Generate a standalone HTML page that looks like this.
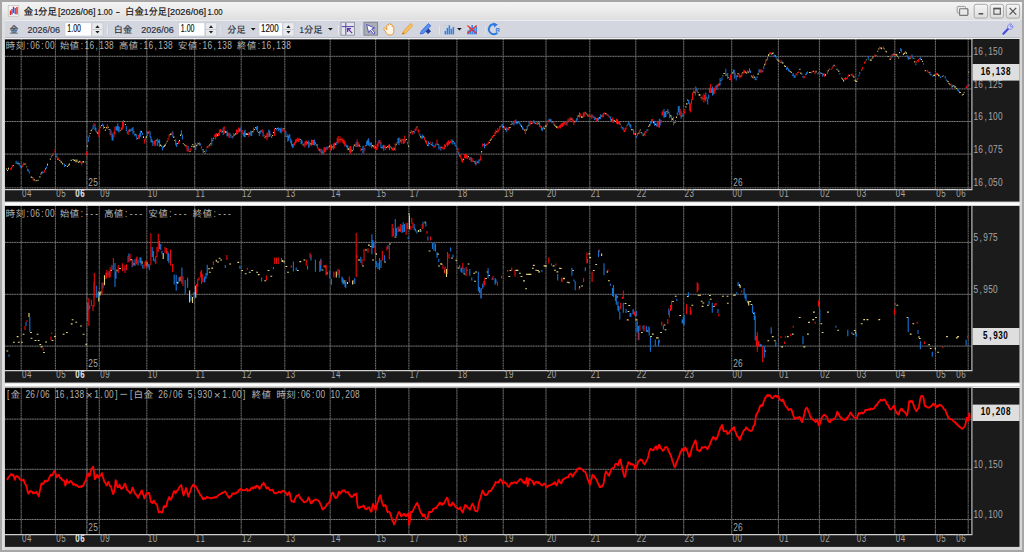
<!DOCTYPE html>
<html lang="ja"><head><meta charset="utf-8"><title>金1分足[2026/06]1.00 - 白金1分足[2026/06]1.00</title>
<style>
html,body{margin:0;padding:0;background:#a6a6a6;overflow:hidden}
svg{display:block}
text{white-space:pre}
</style></head><body>
<svg width="1024" height="552" viewBox="0 0 1024 552">
<defs>
<linearGradient id="gt" x1="0" y1="0" x2="0" y2="1"><stop offset="0" stop-color="#f3f3f3"/><stop offset="0.5" stop-color="#ebebeb"/><stop offset="1" stop-color="#dedede"/></linearGradient>
<linearGradient id="gb" x1="0" y1="0" x2="0" y2="1"><stop offset="0" stop-color="#f6f6f6"/><stop offset="1" stop-color="#dcdcdc"/></linearGradient>
</defs>
<rect x="0" y="0" width="1024" height="552" fill="#a6a6a6"/>
<rect x="2" y="2" width="1020" height="548" fill="#e6e6e6"/>
<rect x="2" y="2" width="1020" height="18" fill="url(#gt)"/>
<rect x="5" y="20" width="1015" height="18" fill="#d3d6de"/>
<rect x="5" y="20" width="1015" height="1" fill="#e9ebf0"/>
<rect x="5" y="37" width="1015" height="1" fill="#b9bdc8"/>
<rect x="5" y="38" width="1015" height="1" fill="#e8e8e8"/>
<g>
<rect x="8.2" y="5.6" width="10.6" height="10.6" fill="#f4f4f4" stroke="#b8b8b8" stroke-width="0.6"/>
<rect x="9.8" y="10.5" width="1.4" height="4.5" fill="#e82020"/>
<rect x="11.3" y="9" width="1.4" height="5.4" fill="#2a6ae0"/>
<rect x="12.8" y="6.8" width="1.4" height="6.2" fill="#e82020"/>
<rect x="14.5" y="8" width="1.4" height="6.199999999999999" fill="#2a6ae0"/>
<rect x="16.3" y="7" width="1.4" height="7.4" fill="#e82020"/>
</g>
<text x="23.8" y="14.6" textLength="9.4" lengthAdjust="spacingAndGlyphs" font-family="'Liberation Sans','IPAGothic','Noto Sans CJK JP',sans-serif" font-size="10" fill="#151515" stroke="#151515" stroke-width="0.18">金</text>
<text x="33.9" y="14.6" textLength="4.4" lengthAdjust="spacingAndGlyphs" font-family="'Liberation Sans',sans-serif" font-size="9.8" fill="#151515" stroke="#151515" stroke-width="0.18">1</text>
<text x="38" y="14.6" textLength="19" lengthAdjust="spacingAndGlyphs" font-family="'Liberation Sans','IPAGothic','Noto Sans CJK JP',sans-serif" font-size="10" fill="#151515" stroke="#151515" stroke-width="0.18">分足</text>
<text x="58" y="14.6" textLength="37.6" lengthAdjust="spacingAndGlyphs" font-family="'Liberation Sans',sans-serif" font-size="9.6" fill="#151515" stroke="#151515" stroke-width="0.18">[2026/06]</text>
<text x="97.3" y="14.6" textLength="15.2" lengthAdjust="spacingAndGlyphs" font-family="'Liberation Sans',sans-serif" font-size="9.6" fill="#151515" stroke="#151515" stroke-width="0.18">1.00</text>
<text x="115.8" y="14.6" textLength="4.2" lengthAdjust="spacingAndGlyphs" font-family="'Liberation Sans',sans-serif" font-size="9.6" fill="#151515" stroke="#151515" stroke-width="0.18">-</text>
<text x="125" y="14.6" textLength="18.8" lengthAdjust="spacingAndGlyphs" font-family="'Liberation Sans','IPAGothic','Noto Sans CJK JP',sans-serif" font-size="10" fill="#151515" stroke="#151515" stroke-width="0.18">白金</text>
<text x="144.0" y="14.6" textLength="4.4" lengthAdjust="spacingAndGlyphs" font-family="'Liberation Sans',sans-serif" font-size="9.8" fill="#151515" stroke="#151515" stroke-width="0.18">1</text>
<text x="148.7" y="14.6" textLength="18.2" lengthAdjust="spacingAndGlyphs" font-family="'Liberation Sans','IPAGothic','Noto Sans CJK JP',sans-serif" font-size="10" fill="#151515" stroke="#151515" stroke-width="0.18">分足</text>
<text x="167.5" y="14.6" textLength="38.6" lengthAdjust="spacingAndGlyphs" font-family="'Liberation Sans',sans-serif" font-size="9.6" fill="#151515" stroke="#151515" stroke-width="0.18">[2026/06]</text>
<text x="207.5" y="14.6" textLength="15.2" lengthAdjust="spacingAndGlyphs" font-family="'Liberation Sans',sans-serif" font-size="9.6" fill="#151515" stroke="#151515" stroke-width="0.18">1.00</text>
<rect x="959.6" y="8.8" width="8.2" height="6.6" fill="#e6e6e6" stroke="#8a8a8a" stroke-width="1.1" rx="0.8"/>
<rect x="957.2" y="6.4" width="8.2" height="6.6" fill="#ececec" stroke="#9a9a9a" stroke-width="1" rx="0.8"/>
<rect x="959.6" y="8.8" width="8.2" height="6.6" fill="#e9e9e9" stroke="#7a7a7a" stroke-width="1.1" rx="0.8"/>
<rect x="974.2" y="4.3" width="13.4" height="13.8" rx="2" fill="url(#gb)" stroke="#a9a9a9" stroke-width="1"/>
<rect x="990.2" y="4.3" width="13.4" height="13.8" rx="2" fill="url(#gb)" stroke="#a9a9a9" stroke-width="1"/>
<rect x="1006.2" y="4.3" width="13.4" height="13.8" rx="2" fill="url(#gb)" stroke="#a9a9a9" stroke-width="1"/>
<rect x="978.6" y="13" width="4.6" height="1.6" fill="#555"/>
<rect x="993.9" y="8.4" width="6.4" height="5.8" fill="none" stroke="#555" stroke-width="1.1"/>
<rect x="993.4" y="7.8" width="7.4" height="1.6" fill="#555"/>
<path d="M1009.6 7.9 L1016.2 14.6 M1016.2 7.9 L1009.6 14.6" stroke="#555" stroke-width="1.3" fill="none"/>
<text x="9.4" y="33.2" textLength="8.8" lengthAdjust="spacingAndGlyphs" font-family="'Liberation Sans','IPAGothic','Noto Sans CJK JP',sans-serif" font-size="9.6" fill="#2a3040" stroke="#2a3040" stroke-width="0.18">金</text>
<text x="27.6" y="32.8" textLength="32.4" lengthAdjust="spacingAndGlyphs" font-family="'Liberation Sans',sans-serif" font-size="9.4" fill="#2a3040" stroke="#2a3040" stroke-width="0.18">2026/06</text>
<rect x="65" y="22.8" width="26.299999999999997" height="13.2" fill="#ffffff" stroke="#c3c8d2" stroke-width="0.6"/>
<rect x="91.89999999999999" y="22.8" width="11.100000000000003" height="13.2" fill="#e9eaee" stroke="#c0c4cc" stroke-width="0.6"/>
<rect x="92.5" y="29.1" width="9.900000000000002" height="0.8" fill="#bfc3cb"/>
<path d="M95.35 27.9 L97.44999999999999 25.3 L99.54999999999998 27.9 Z M95.35 31 L97.44999999999999 33.6 L99.54999999999998 31 Z" fill="#222"/>
<text x="67.3" y="31.5" textLength="13.6" lengthAdjust="spacingAndGlyphs" font-family="'Liberation Sans',sans-serif" font-size="10.2" fill="#151515" stroke="#151515" stroke-width="0.2">1.00</text>
<rect x="106.9" y="25.4" width="1.2" height="9" fill="#e6e9ee"/>
<rect x="108.0" y="25.4" width="0.6" height="9" fill="#c3c7d0"/>
<text x="113.8" y="33.2" textLength="18.4" lengthAdjust="spacingAndGlyphs" font-family="'Liberation Sans','IPAGothic','Noto Sans CJK JP',sans-serif" font-size="9.6" fill="#2a3040" stroke="#2a3040" stroke-width="0.18">白金</text>
<text x="141.3" y="32.8" textLength="32.4" lengthAdjust="spacingAndGlyphs" font-family="'Liberation Sans',sans-serif" font-size="9.4" fill="#2a3040" stroke="#2a3040" stroke-width="0.18">2026/06</text>
<rect x="178.6" y="22.8" width="26.200000000000017" height="13.2" fill="#ffffff" stroke="#c3c8d2" stroke-width="0.6"/>
<rect x="205.4" y="22.8" width="11.199999999999983" height="13.2" fill="#e9eaee" stroke="#c0c4cc" stroke-width="0.6"/>
<rect x="206.0" y="29.1" width="9.999999999999982" height="0.8" fill="#bfc3cb"/>
<path d="M208.9 27.9 L211.0 25.3 L213.1 27.9 Z M208.9 31 L211.0 33.6 L213.1 31 Z" fill="#222"/>
<text x="180.8" y="31.5" textLength="13.6" lengthAdjust="spacingAndGlyphs" font-family="'Liberation Sans',sans-serif" font-size="10.2" fill="#151515" stroke="#151515" stroke-width="0.2">1.00</text>
<rect x="220.4" y="25.4" width="1.2" height="9" fill="#e6e9ee"/>
<rect x="221.5" y="25.4" width="0.6" height="9" fill="#c3c7d0"/>
<text x="227.3" y="33.2" textLength="18.2" lengthAdjust="spacingAndGlyphs" font-family="'Liberation Sans','IPAGothic','Noto Sans CJK JP',sans-serif" font-size="9.6" fill="#2a3040" stroke="#2a3040" stroke-width="0.18">分足</text>
<path d="M250.8 27.9 L255.6 27.9 L253.2 30.6 Z" fill="#1a1a1a"/>
<rect x="259" y="22.8" width="23.30000000000001" height="13.2" fill="#ffffff" stroke="#c3c8d2" stroke-width="0.6"/>
<rect x="282.90000000000003" y="22.8" width="11.099999999999989" height="13.2" fill="#e9eaee" stroke="#c0c4cc" stroke-width="0.6"/>
<rect x="283.5" y="29.1" width="9.899999999999988" height="0.8" fill="#bfc3cb"/>
<path d="M286.35 27.9 L288.45000000000005 25.3 L290.55000000000007 27.9 Z M286.35 31 L288.45000000000005 33.6 L290.55000000000007 31 Z" fill="#222"/>
<text x="261" y="31.5" textLength="17.6" lengthAdjust="spacingAndGlyphs" font-family="'Liberation Sans',sans-serif" font-size="10.2" fill="#151515" stroke="#151515" stroke-width="0.2">1200</text>
<text x="299.6" y="32.8" textLength="4.4" lengthAdjust="spacingAndGlyphs" font-family="'Liberation Sans',sans-serif" font-size="9.6" fill="#2a3040" stroke="#2a3040" stroke-width="0.18">1</text>
<text x="304" y="33.2" textLength="18.6" lengthAdjust="spacingAndGlyphs" font-family="'Liberation Sans','IPAGothic','Noto Sans CJK JP',sans-serif" font-size="9.6" fill="#2a3040" stroke="#2a3040" stroke-width="0.18">分足</text>
<path d="M328 27.9 L332.8 27.9 L330.4 30.6 Z" fill="#1a1a1a"/>
<rect x="337.9" y="25.4" width="1.2" height="9" fill="#e6e9ee"/>
<rect x="339.0" y="25.4" width="0.6" height="9" fill="#c3c7d0"/>
<rect x="341" y="22.2" width="13.4" height="13" fill="#e3e6ec" stroke="#8d9099" stroke-width="0.9"/>
<path d="M345.8 23 V34.6 M341.8 26.6 H353.8" stroke="#5a3fb0" stroke-width="1" fill="none"/>
<path d="M352.2 33.2 L348.2 29.2 M347.6 32 V28.6 H351" stroke="#5a2fa0" stroke-width="1.1" fill="none"/>
<rect x="360.79999999999995" y="25.4" width="1.2" height="9" fill="#e6e9ee"/>
<rect x="361.9" y="25.4" width="0.6" height="9" fill="#c3c7d0"/>
<rect x="364" y="22.2" width="13.6" height="13" fill="#a9adb6" stroke="#7e828c" stroke-width="0.9"/>
<path d="M366.6 24.6 L374.6 28 L371.6 29 L375 33 L373.4 34 L370.4 30.2 L368.6 32.6 Z" fill="#ffffff" stroke="#4a3fc0" stroke-width="0.9" stroke-linejoin="round"/>
<path d="M385.6 28.4 C384.6 27 383.2 27.6 384 29.2 L386.6 33.4 C387.4 34.6 388.6 35 390.4 35 C392.6 35 393.8 33.6 393.8 31.4 L393.8 27.2 C393.8 26 392.4 26 392.2 27 L392.2 25.2 C392.2 24 390.6 24 390.4 25 L390.4 24.4 C390.2 23.2 388.6 23.2 388.6 24.6 L388.4 25.4 C388.2 24.4 386.8 24.4 386.8 25.6 L386.8 30 Z" fill="#fff6e6" stroke="#e89a3a" stroke-width="1"/>
<path d="M402.4 34.2 L403.4 31.2 L410.6 23.6 L412.8 25.6 L405.6 33.2 Z" fill="#f6c064" stroke="#e89a30" stroke-width="0.8" stroke-linejoin="round"/>
<path d="M402.4 34.2 L403 32.4 L404.2 33.6 Z" fill="#c04020"/>
<path d="M420.2 34 L421.4 31 L428.4 23.6 L430.8 25.8 L423.8 33.2 Z" fill="#5a90f0" stroke="#2f62d8" stroke-width="0.8" stroke-linejoin="round"/>
<path d="M425.6 31.6 L428.6 28.6 L431 31.2 L428 34 Z" fill="#1f3f9a"/>
<rect x="439.2" y="25.4" width="1.2" height="9" fill="#e6e9ee"/>
<rect x="440.3" y="25.4" width="0.6" height="9" fill="#c3c7d0"/>
<rect x="443.4" y="24" width="11.4" height="10.8" fill="#cfd3db"/>
<rect x="444.6" y="31.0" width="1.5" height="3.4" fill="#2f7fe6"/>
<rect x="446.6" y="28.0" width="1.5" height="6.4" fill="#2f7fe6"/>
<rect x="448.6" y="25.4" width="1.5" height="9" fill="#2f7fe6"/>
<rect x="450.6" y="28.799999999999997" width="1.5" height="5.6" fill="#2f7fe6"/>
<rect x="452.6" y="27.0" width="1.5" height="7.4" fill="#2f7fe6"/>
<path d="M457 27.9 L461.8 27.9 L459.4 30.6 Z" fill="#1a1a1a"/>
<rect x="466.4" y="24" width="11" height="10.8" fill="#d6d9e0"/>
<rect x="467.4" y="30.4" width="1.5" height="4" fill="#2f7fe6"/>
<rect x="469.4" y="27.4" width="1.5" height="7" fill="#2f7fe6"/>
<rect x="471.4" y="25.0" width="1.5" height="9.4" fill="#2f7fe6"/>
<rect x="473.4" y="28.4" width="1.5" height="6" fill="#2f7fe6"/>
<rect x="475.4" y="26.4" width="1.5" height="8" fill="#2f7fe6"/>
<path d="M467.4 25.6 L476.6 33.6 M476.6 25.6 L467.4 33.6" stroke="#e83030" stroke-width="1.3" fill="none"/>
<rect x="485.4" y="25.4" width="1.2" height="9" fill="#e6e9ee"/>
<rect x="486.5" y="25.4" width="0.6" height="9" fill="#c3c7d0"/>
<path d="M497.4 32.6 A4.9 4.9 0 1 1 495.4 24.6" stroke="#2a78e0" stroke-width="1.9" fill="none"/>
<path d="M493.2 22.4 L497.8 24.4 L494.2 27.4 Z" fill="#2a78e0"/>
<text x="495.6" y="31.6" font-size="6" font-weight="bold" fill="#2a78e0" font-family="'Liberation Sans',sans-serif">R</text>
<path d="M1003.4 33.8 L1008.4 28.4" stroke="#4a52e0" stroke-width="2.2" stroke-linecap="round" fill="none"/>
<path d="M1008.2 28.6 C1006.8 26.2 1008.8 23.4 1011.6 24 L1009.8 26 L1010.8 27.4 L1012.8 25.6 C1013.6 28.4 1010.8 30.2 1008.2 28.6 Z" fill="#e6e9ff" stroke="#6a70e8" stroke-width="0.9"/>
<rect x="4.6" y="39" width="1015.0" height="162.9" fill="#1b1b1b"/>
<rect x="5" y="39" width="966.5" height="150" fill="#000"/>
<path d="M5 56.3 H971.5 M5 88.9 H971.5 M5 121.5 H971.5 M5 154.1 H971.5 M5 187.9 H971.5 " stroke="#848484" stroke-width="0.95" stroke-dasharray="1.3 0.37" fill="none"/>
<path d="M21.2 39 V189 M55.4 39 V189 M99.3 39 V189 M146.8 39 V189 M194.7 39 V189 M241.2 39 V189 M284.8 39 V189 M330.2 39 V189 M375.6 39 V189 M408.9 39 V189 M456.9 39 V189 M503.2 39 V189 M546 39 V189 M589.8 39 V189 M635.8 39 V189 M683.7 39 V189 M731.7 39 V189 M778.4 39 V189 M819.4 39 V189 M855.8 39 V189 M894.8 39 V189 M935.4 39 V189 M968.2 39 V189 " stroke="#6e6e6e" stroke-width="1.05" stroke-dasharray="1.3 0.37" fill="none"/>
<path d="M86.9 39 V189" stroke="#8c8c8c" stroke-width="1.1" stroke-dasharray="1.3 0.37" fill="none"/>
<path d="M4.6 189.6 H972.4" stroke="#cfcfcf" stroke-width="1.3" fill="none"/>
<path d="M971.9 39 V189.7" stroke="#acacac" stroke-width="1.3" fill="none"/>
<text transform="translate(21.90 197.1) scale(0.8 1)" x="0.29 6.44" fill="#a6a6a6" font-family="'Liberation Sans',sans-serif" font-size="10">04</text>
<text transform="translate(56.10 197.1) scale(0.8 1)" x="0.29 6.44" fill="#a6a6a6" font-family="'Liberation Sans',sans-serif" font-size="10">05</text>
<text transform="translate(100.00 197.1) scale(0.8 1)" x="0.29 6.44" fill="#a6a6a6" font-family="'Liberation Sans',sans-serif" font-size="10">09</text>
<text transform="translate(147.50 197.1) scale(0.8 1)" x="0.29 6.44" fill="#a6a6a6" font-family="'Liberation Sans',sans-serif" font-size="10">10</text>
<text transform="translate(195.40 197.1) scale(0.8 1)" x="0.29 6.44" fill="#a6a6a6" font-family="'Liberation Sans',sans-serif" font-size="10">11</text>
<text transform="translate(241.90 197.1) scale(0.8 1)" x="0.29 6.44" fill="#a6a6a6" font-family="'Liberation Sans',sans-serif" font-size="10">12</text>
<text transform="translate(285.50 197.1) scale(0.8 1)" x="0.29 6.44" fill="#a6a6a6" font-family="'Liberation Sans',sans-serif" font-size="10">13</text>
<text transform="translate(330.90 197.1) scale(0.8 1)" x="0.29 6.44" fill="#a6a6a6" font-family="'Liberation Sans',sans-serif" font-size="10">14</text>
<text transform="translate(376.30 197.1) scale(0.8 1)" x="0.29 6.44" fill="#a6a6a6" font-family="'Liberation Sans',sans-serif" font-size="10">15</text>
<text transform="translate(409.60 197.1) scale(0.8 1)" x="0.29 6.44" fill="#a6a6a6" font-family="'Liberation Sans',sans-serif" font-size="10">17</text>
<text transform="translate(457.60 197.1) scale(0.8 1)" x="0.29 6.44" fill="#a6a6a6" font-family="'Liberation Sans',sans-serif" font-size="10">18</text>
<text transform="translate(503.90 197.1) scale(0.8 1)" x="0.29 6.44" fill="#a6a6a6" font-family="'Liberation Sans',sans-serif" font-size="10">19</text>
<text transform="translate(546.70 197.1) scale(0.8 1)" x="0.29 6.44" fill="#a6a6a6" font-family="'Liberation Sans',sans-serif" font-size="10">20</text>
<text transform="translate(590.50 197.1) scale(0.8 1)" x="0.29 6.44" fill="#a6a6a6" font-family="'Liberation Sans',sans-serif" font-size="10">21</text>
<text transform="translate(636.50 197.1) scale(0.8 1)" x="0.29 6.44" fill="#a6a6a6" font-family="'Liberation Sans',sans-serif" font-size="10">22</text>
<text transform="translate(684.40 197.1) scale(0.8 1)" x="0.29 6.44" fill="#a6a6a6" font-family="'Liberation Sans',sans-serif" font-size="10">23</text>
<text transform="translate(732.40 197.1) scale(0.8 1)" x="0.29 6.44" fill="#a6a6a6" font-family="'Liberation Sans',sans-serif" font-size="10">00</text>
<text transform="translate(779.10 197.1) scale(0.8 1)" x="0.29 6.44" fill="#a6a6a6" font-family="'Liberation Sans',sans-serif" font-size="10">01</text>
<text transform="translate(820.10 197.1) scale(0.8 1)" x="0.29 6.44" fill="#a6a6a6" font-family="'Liberation Sans',sans-serif" font-size="10">02</text>
<text transform="translate(856.50 197.1) scale(0.8 1)" x="0.29 6.44" fill="#a6a6a6" font-family="'Liberation Sans',sans-serif" font-size="10">03</text>
<text transform="translate(895.50 197.1) scale(0.8 1)" x="0.29 6.44" fill="#a6a6a6" font-family="'Liberation Sans',sans-serif" font-size="10">04</text>
<text transform="translate(936.10 197.1) scale(0.8 1)" x="0.29 6.44" fill="#a6a6a6" font-family="'Liberation Sans',sans-serif" font-size="10">05</text>
<text transform="translate(956.00 197.1) scale(0.8 1)" x="0.29 6.44" fill="#a6a6a6" font-family="'Liberation Sans',sans-serif" font-size="10">06</text>
<text transform="translate(75.00 197.1) scale(0.8 1)" x="0.29 6.44" fill="#e4e4e4" font-weight="bold" font-family="'Liberation Sans',sans-serif" font-size="10">06</text>
<text transform="translate(88.20 185.6) scale(0.8 1)" x="0.18 6.33" fill="#a6a6a6" font-family="'Liberation Sans',sans-serif" font-size="10.4">25</text>
<text transform="translate(733.00 185.6) scale(0.8 1)" x="0.18 6.33" fill="#a6a6a6" font-family="'Liberation Sans',sans-serif" font-size="10.4">26</text>
<text transform="translate(973.30 55.0) scale(0.8 1)" x="0.18 6.33 13.93 18.63 24.78 30.93" fill="#a6a6a6" font-family="'Liberation Sans',sans-serif" font-size="10.4">16,150</text>
<text transform="translate(973.30 87.6) scale(0.8 1)" x="0.18 6.33 13.93 18.63 24.78 30.93" fill="#a6a6a6" font-family="'Liberation Sans',sans-serif" font-size="10.4">16,125</text>
<text transform="translate(973.30 120.2) scale(0.8 1)" x="0.18 6.33 13.93 18.63 24.78 30.93" fill="#a6a6a6" font-family="'Liberation Sans',sans-serif" font-size="10.4">16,100</text>
<text transform="translate(973.30 152.8) scale(0.8 1)" x="0.18 6.33 13.93 18.63 24.78 30.93" fill="#a6a6a6" font-family="'Liberation Sans',sans-serif" font-size="10.4">16,075</text>
<text transform="translate(973.30 186.2) scale(0.8 1)" x="0.18 6.33 13.93 18.63 24.78 30.93" fill="#a6a6a6" font-family="'Liberation Sans',sans-serif" font-size="10.4">16,050</text>
<rect x="972.6" y="64" width="47.0" height="16.599999999999994" fill="#dedede"/>
<text transform="translate(980.40 74.8) scale(0.78 1)" x="0.35 6.82 14.74 19.77 26.24 32.72" fill="#000" font-weight="bold" font-family="'Liberation Sans',sans-serif" font-size="10.4">16,138</text>
<rect x="4.6" y="206" width="1015.0" height="176.89999999999998" fill="#1b1b1b"/>
<rect x="5" y="206" width="966.5" height="164" fill="#000"/>
<path d="M5 242.4 H971.5 M5 294.3 H971.5 M5 346.1 H971.5 " stroke="#848484" stroke-width="0.95" stroke-dasharray="1.3 0.37" fill="none"/>
<path d="M21.2 206 V370 M55.4 206 V370 M99.3 206 V370 M146.8 206 V370 M194.7 206 V370 M241.2 206 V370 M284.8 206 V370 M330.2 206 V370 M375.6 206 V370 M408.9 206 V370 M456.9 206 V370 M503.2 206 V370 M546 206 V370 M589.8 206 V370 M635.8 206 V370 M683.7 206 V370 M731.7 206 V370 M778.4 206 V370 M819.4 206 V370 M855.8 206 V370 M894.8 206 V370 M935.4 206 V370 M968.2 206 V370 " stroke="#6e6e6e" stroke-width="1.05" stroke-dasharray="1.3 0.37" fill="none"/>
<path d="M86.9 206 V370" stroke="#8c8c8c" stroke-width="1.1" stroke-dasharray="1.3 0.37" fill="none"/>
<path d="M4.6 370.6 H972.4" stroke="#cfcfcf" stroke-width="1.3" fill="none"/>
<path d="M971.9 206 V370.7" stroke="#acacac" stroke-width="1.3" fill="none"/>
<text transform="translate(21.90 378.1) scale(0.8 1)" x="0.29 6.44" fill="#a6a6a6" font-family="'Liberation Sans',sans-serif" font-size="10">04</text>
<text transform="translate(56.10 378.1) scale(0.8 1)" x="0.29 6.44" fill="#a6a6a6" font-family="'Liberation Sans',sans-serif" font-size="10">05</text>
<text transform="translate(100.00 378.1) scale(0.8 1)" x="0.29 6.44" fill="#a6a6a6" font-family="'Liberation Sans',sans-serif" font-size="10">09</text>
<text transform="translate(147.50 378.1) scale(0.8 1)" x="0.29 6.44" fill="#a6a6a6" font-family="'Liberation Sans',sans-serif" font-size="10">10</text>
<text transform="translate(195.40 378.1) scale(0.8 1)" x="0.29 6.44" fill="#a6a6a6" font-family="'Liberation Sans',sans-serif" font-size="10">11</text>
<text transform="translate(241.90 378.1) scale(0.8 1)" x="0.29 6.44" fill="#a6a6a6" font-family="'Liberation Sans',sans-serif" font-size="10">12</text>
<text transform="translate(285.50 378.1) scale(0.8 1)" x="0.29 6.44" fill="#a6a6a6" font-family="'Liberation Sans',sans-serif" font-size="10">13</text>
<text transform="translate(330.90 378.1) scale(0.8 1)" x="0.29 6.44" fill="#a6a6a6" font-family="'Liberation Sans',sans-serif" font-size="10">14</text>
<text transform="translate(376.30 378.1) scale(0.8 1)" x="0.29 6.44" fill="#a6a6a6" font-family="'Liberation Sans',sans-serif" font-size="10">15</text>
<text transform="translate(409.60 378.1) scale(0.8 1)" x="0.29 6.44" fill="#a6a6a6" font-family="'Liberation Sans',sans-serif" font-size="10">17</text>
<text transform="translate(457.60 378.1) scale(0.8 1)" x="0.29 6.44" fill="#a6a6a6" font-family="'Liberation Sans',sans-serif" font-size="10">18</text>
<text transform="translate(503.90 378.1) scale(0.8 1)" x="0.29 6.44" fill="#a6a6a6" font-family="'Liberation Sans',sans-serif" font-size="10">19</text>
<text transform="translate(546.70 378.1) scale(0.8 1)" x="0.29 6.44" fill="#a6a6a6" font-family="'Liberation Sans',sans-serif" font-size="10">20</text>
<text transform="translate(590.50 378.1) scale(0.8 1)" x="0.29 6.44" fill="#a6a6a6" font-family="'Liberation Sans',sans-serif" font-size="10">21</text>
<text transform="translate(636.50 378.1) scale(0.8 1)" x="0.29 6.44" fill="#a6a6a6" font-family="'Liberation Sans',sans-serif" font-size="10">22</text>
<text transform="translate(684.40 378.1) scale(0.8 1)" x="0.29 6.44" fill="#a6a6a6" font-family="'Liberation Sans',sans-serif" font-size="10">23</text>
<text transform="translate(732.40 378.1) scale(0.8 1)" x="0.29 6.44" fill="#a6a6a6" font-family="'Liberation Sans',sans-serif" font-size="10">00</text>
<text transform="translate(779.10 378.1) scale(0.8 1)" x="0.29 6.44" fill="#a6a6a6" font-family="'Liberation Sans',sans-serif" font-size="10">01</text>
<text transform="translate(820.10 378.1) scale(0.8 1)" x="0.29 6.44" fill="#a6a6a6" font-family="'Liberation Sans',sans-serif" font-size="10">02</text>
<text transform="translate(856.50 378.1) scale(0.8 1)" x="0.29 6.44" fill="#a6a6a6" font-family="'Liberation Sans',sans-serif" font-size="10">03</text>
<text transform="translate(895.50 378.1) scale(0.8 1)" x="0.29 6.44" fill="#a6a6a6" font-family="'Liberation Sans',sans-serif" font-size="10">04</text>
<text transform="translate(936.10 378.1) scale(0.8 1)" x="0.29 6.44" fill="#a6a6a6" font-family="'Liberation Sans',sans-serif" font-size="10">05</text>
<text transform="translate(956.00 378.1) scale(0.8 1)" x="0.29 6.44" fill="#a6a6a6" font-family="'Liberation Sans',sans-serif" font-size="10">06</text>
<text transform="translate(75.00 378.1) scale(0.8 1)" x="0.29 6.44" fill="#e4e4e4" font-weight="bold" font-family="'Liberation Sans',sans-serif" font-size="10">06</text>
<text transform="translate(88.20 366.6) scale(0.8 1)" x="0.18 6.33" fill="#a6a6a6" font-family="'Liberation Sans',sans-serif" font-size="10.4">25</text>
<text transform="translate(733.00 366.6) scale(0.8 1)" x="0.18 6.33" fill="#a6a6a6" font-family="'Liberation Sans',sans-serif" font-size="10.4">26</text>
<text transform="translate(973.30 240.8) scale(0.8 1)" x="0.18 7.78 12.48 18.63 24.78" fill="#a6a6a6" font-family="'Liberation Sans',sans-serif" font-size="10.4">5,975</text>
<text transform="translate(973.30 292.8) scale(0.8 1)" x="0.18 7.78 12.48 18.63 24.78" fill="#a6a6a6" font-family="'Liberation Sans',sans-serif" font-size="10.4">5,950</text>
<rect x="972.6" y="328" width="47.0" height="17" fill="#dedede"/>
<text transform="translate(982.80 338.8) scale(0.78 1)" x="0.35 8.27 13.29 19.77 26.24" fill="#000" font-weight="bold" font-family="'Liberation Sans',sans-serif" font-size="10.4">5,930</text>
<rect x="4.6" y="388" width="1015.0" height="158.89999999999998" fill="#1b1b1b"/>
<rect x="5" y="388" width="966.5" height="146" fill="#000"/>
<path d="M5 419.1 H971.5 M5 469.3 H971.5 M5 519.5 H971.5 " stroke="#848484" stroke-width="0.95" stroke-dasharray="1.3 0.37" fill="none"/>
<path d="M21.2 388 V534 M55.4 388 V534 M99.3 388 V534 M146.8 388 V534 M194.7 388 V534 M241.2 388 V534 M284.8 388 V534 M330.2 388 V534 M375.6 388 V534 M408.9 388 V534 M456.9 388 V534 M503.2 388 V534 M546 388 V534 M589.8 388 V534 M635.8 388 V534 M683.7 388 V534 M731.7 388 V534 M778.4 388 V534 M819.4 388 V534 M855.8 388 V534 M894.8 388 V534 M935.4 388 V534 M968.2 388 V534 " stroke="#6e6e6e" stroke-width="1.05" stroke-dasharray="1.3 0.37" fill="none"/>
<path d="M86.9 388 V534" stroke="#8c8c8c" stroke-width="1.1" stroke-dasharray="1.3 0.37" fill="none"/>
<path d="M4.6 534.6 H972.4" stroke="#cfcfcf" stroke-width="1.3" fill="none"/>
<path d="M971.9 388 V534.7" stroke="#acacac" stroke-width="1.3" fill="none"/>
<text transform="translate(21.90 542.1) scale(0.8 1)" x="0.29 6.44" fill="#a6a6a6" font-family="'Liberation Sans',sans-serif" font-size="10">04</text>
<text transform="translate(56.10 542.1) scale(0.8 1)" x="0.29 6.44" fill="#a6a6a6" font-family="'Liberation Sans',sans-serif" font-size="10">05</text>
<text transform="translate(100.00 542.1) scale(0.8 1)" x="0.29 6.44" fill="#a6a6a6" font-family="'Liberation Sans',sans-serif" font-size="10">09</text>
<text transform="translate(147.50 542.1) scale(0.8 1)" x="0.29 6.44" fill="#a6a6a6" font-family="'Liberation Sans',sans-serif" font-size="10">10</text>
<text transform="translate(195.40 542.1) scale(0.8 1)" x="0.29 6.44" fill="#a6a6a6" font-family="'Liberation Sans',sans-serif" font-size="10">11</text>
<text transform="translate(241.90 542.1) scale(0.8 1)" x="0.29 6.44" fill="#a6a6a6" font-family="'Liberation Sans',sans-serif" font-size="10">12</text>
<text transform="translate(285.50 542.1) scale(0.8 1)" x="0.29 6.44" fill="#a6a6a6" font-family="'Liberation Sans',sans-serif" font-size="10">13</text>
<text transform="translate(330.90 542.1) scale(0.8 1)" x="0.29 6.44" fill="#a6a6a6" font-family="'Liberation Sans',sans-serif" font-size="10">14</text>
<text transform="translate(376.30 542.1) scale(0.8 1)" x="0.29 6.44" fill="#a6a6a6" font-family="'Liberation Sans',sans-serif" font-size="10">15</text>
<text transform="translate(409.60 542.1) scale(0.8 1)" x="0.29 6.44" fill="#a6a6a6" font-family="'Liberation Sans',sans-serif" font-size="10">17</text>
<text transform="translate(457.60 542.1) scale(0.8 1)" x="0.29 6.44" fill="#a6a6a6" font-family="'Liberation Sans',sans-serif" font-size="10">18</text>
<text transform="translate(503.90 542.1) scale(0.8 1)" x="0.29 6.44" fill="#a6a6a6" font-family="'Liberation Sans',sans-serif" font-size="10">19</text>
<text transform="translate(546.70 542.1) scale(0.8 1)" x="0.29 6.44" fill="#a6a6a6" font-family="'Liberation Sans',sans-serif" font-size="10">20</text>
<text transform="translate(590.50 542.1) scale(0.8 1)" x="0.29 6.44" fill="#a6a6a6" font-family="'Liberation Sans',sans-serif" font-size="10">21</text>
<text transform="translate(636.50 542.1) scale(0.8 1)" x="0.29 6.44" fill="#a6a6a6" font-family="'Liberation Sans',sans-serif" font-size="10">22</text>
<text transform="translate(684.40 542.1) scale(0.8 1)" x="0.29 6.44" fill="#a6a6a6" font-family="'Liberation Sans',sans-serif" font-size="10">23</text>
<text transform="translate(732.40 542.1) scale(0.8 1)" x="0.29 6.44" fill="#a6a6a6" font-family="'Liberation Sans',sans-serif" font-size="10">00</text>
<text transform="translate(779.10 542.1) scale(0.8 1)" x="0.29 6.44" fill="#a6a6a6" font-family="'Liberation Sans',sans-serif" font-size="10">01</text>
<text transform="translate(820.10 542.1) scale(0.8 1)" x="0.29 6.44" fill="#a6a6a6" font-family="'Liberation Sans',sans-serif" font-size="10">02</text>
<text transform="translate(856.50 542.1) scale(0.8 1)" x="0.29 6.44" fill="#a6a6a6" font-family="'Liberation Sans',sans-serif" font-size="10">03</text>
<text transform="translate(895.50 542.1) scale(0.8 1)" x="0.29 6.44" fill="#a6a6a6" font-family="'Liberation Sans',sans-serif" font-size="10">04</text>
<text transform="translate(936.10 542.1) scale(0.8 1)" x="0.29 6.44" fill="#a6a6a6" font-family="'Liberation Sans',sans-serif" font-size="10">05</text>
<text transform="translate(956.00 542.1) scale(0.8 1)" x="0.29 6.44" fill="#a6a6a6" font-family="'Liberation Sans',sans-serif" font-size="10">06</text>
<text transform="translate(75.00 542.1) scale(0.8 1)" x="0.29 6.44" fill="#e4e4e4" font-weight="bold" font-family="'Liberation Sans',sans-serif" font-size="10">06</text>
<text transform="translate(88.20 530.6) scale(0.8 1)" x="0.18 6.33" fill="#a6a6a6" font-family="'Liberation Sans',sans-serif" font-size="10.4">25</text>
<text transform="translate(733.00 530.6) scale(0.8 1)" x="0.18 6.33" fill="#a6a6a6" font-family="'Liberation Sans',sans-serif" font-size="10.4">26</text>
<text transform="translate(973.30 467.6) scale(0.8 1)" x="0.18 6.33 13.93 18.63 24.78 30.93" fill="#a6a6a6" font-family="'Liberation Sans',sans-serif" font-size="10.4">10,150</text>
<text transform="translate(973.30 517.8) scale(0.8 1)" x="0.18 6.33 13.93 18.63 24.78 30.93" fill="#a6a6a6" font-family="'Liberation Sans',sans-serif" font-size="10.4">10,100</text>
<rect x="972.6" y="404.6" width="47.0" height="16.399999999999977" fill="#dedede"/>
<text transform="translate(980.40 415.40000000000003) scale(0.78 1)" x="0.35 6.82 14.74 19.77 26.24 32.72" fill="#000" font-weight="bold" font-family="'Liberation Sans',sans-serif" font-size="10.4">10,208</text>
<rect x="4.6" y="201.6" width="1015.2" height="4.4" fill="#cfcfcf"/>
<rect x="4.6" y="202.5" width="1015.2" height="2.6" fill="#ffffff"/>
<rect x="4.6" y="382.6" width="1015.2" height="4.4" fill="#cfcfcf"/>
<rect x="4.6" y="383.5" width="1015.2" height="2.6" fill="#ffffff"/>
<rect x="5" y="38" width="967.5" height="1.35" fill="#efefef"/>
<rect x="5" y="387.2" width="967.5" height="0.9" fill="#9a9a9a"/>
<text transform="translate(5.60 49.2)" x="0.02 9.86" fill="#b2b2b2" font-family="'Liberation Mono','IPAGothic','Noto Sans CJK JP',monospace" font-size="9.8">時刻</text><text transform="translate(25.28 49.2) scale(0.8 1)" x="1.63 6.33 12.48 20.08 24.78 30.93" fill="#b2b2b2" font-family="'Liberation Sans',sans-serif" font-size="10.4">:06:00</text><text transform="translate(59.72 49.2)" x="0.02 9.86" fill="#b2b2b2" font-family="'Liberation Mono','IPAGothic','Noto Sans CJK JP',monospace" font-size="9.8">始値</text><text transform="translate(79.40 49.2) scale(0.8 1)" x="1.63 6.33 12.48 20.08 24.78 30.93 37.08" fill="#b2b2b2" font-family="'Liberation Sans',sans-serif" font-size="10.4">:16,138</text><text transform="translate(118.76 49.2)" x="0.02 9.86" fill="#b2b2b2" font-family="'Liberation Mono','IPAGothic','Noto Sans CJK JP',monospace" font-size="9.8">高値</text><text transform="translate(138.44 49.2) scale(0.8 1)" x="1.63 6.33 12.48 20.08 24.78 30.93 37.08" fill="#b2b2b2" font-family="'Liberation Sans',sans-serif" font-size="10.4">:16,138</text><text transform="translate(177.80 49.2)" x="0.02 9.86" fill="#b2b2b2" font-family="'Liberation Mono','IPAGothic','Noto Sans CJK JP',monospace" font-size="9.8">安値</text><text transform="translate(197.48 49.2) scale(0.8 1)" x="1.63 6.33 12.48 20.08 24.78 30.93 37.08" fill="#b2b2b2" font-family="'Liberation Sans',sans-serif" font-size="10.4">:16,138</text><text transform="translate(236.84 49.2)" x="0.02 9.86" fill="#b2b2b2" font-family="'Liberation Mono','IPAGothic','Noto Sans CJK JP',monospace" font-size="9.8">終値</text><text transform="translate(256.52 49.2) scale(0.8 1)" x="1.63 6.33 12.48 20.08 24.78 30.93 37.08" fill="#b2b2b2" font-family="'Liberation Sans',sans-serif" font-size="10.4">:16,138</text>
<text transform="translate(5.60 216.6)" x="0.02 9.86" fill="#b2b2b2" font-family="'Liberation Mono','IPAGothic','Noto Sans CJK JP',monospace" font-size="9.8">時刻</text><text transform="translate(25.28 216.6) scale(0.8 1)" x="1.63 6.33 12.48 20.08 24.78 30.93" fill="#b2b2b2" font-family="'Liberation Sans',sans-serif" font-size="10.4">:06:00</text><text transform="translate(59.72 216.6)" x="0.02 9.86" fill="#b2b2b2" font-family="'Liberation Mono','IPAGothic','Noto Sans CJK JP',monospace" font-size="9.8">始値</text><text transform="translate(79.40 216.6) scale(0.8 1)" x="1.63 7.49 13.64 19.79" fill="#b2b2b2" font-family="'Liberation Sans',sans-serif" font-size="10.4">:---</text><text transform="translate(104.00 216.6)" x="0.02 9.86" fill="#b2b2b2" font-family="'Liberation Mono','IPAGothic','Noto Sans CJK JP',monospace" font-size="9.8">高値</text><text transform="translate(123.68 216.6) scale(0.8 1)" x="1.63 7.49 13.64 19.79" fill="#b2b2b2" font-family="'Liberation Sans',sans-serif" font-size="10.4">:---</text><text transform="translate(148.28 216.6)" x="0.02 9.86" fill="#b2b2b2" font-family="'Liberation Mono','IPAGothic','Noto Sans CJK JP',monospace" font-size="9.8">安値</text><text transform="translate(167.96 216.6) scale(0.8 1)" x="1.63 7.49 13.64 19.79" fill="#b2b2b2" font-family="'Liberation Sans',sans-serif" font-size="10.4">:---</text><text transform="translate(192.56 216.6)" x="0.02 9.86" fill="#b2b2b2" font-family="'Liberation Mono','IPAGothic','Noto Sans CJK JP',monospace" font-size="9.8">終値</text><text transform="translate(212.24 216.6) scale(0.8 1)" x="1.63 7.49 13.64 19.79" fill="#b2b2b2" font-family="'Liberation Sans',sans-serif" font-size="10.4">:---</text>
<text transform="translate(5.60 398.2) scale(0.8 1)" x="1.63" fill="#b2b2b2" font-family="'Liberation Sans',sans-serif" font-size="10.4">[</text><text transform="translate(10.52 398.2)" x="0.02" fill="#b2b2b2" font-family="'Liberation Mono','IPAGothic','Noto Sans CJK JP',monospace" font-size="9.8">金</text><text transform="translate(25.28 398.2) scale(0.8 1)" x="0.18 6.33 13.93 18.63 24.78 32.38 37.08 43.23 50.83 55.53 61.68 67.83" fill="#b2b2b2" font-family="'Liberation Sans',sans-serif" font-size="10.4">26/06 16,138</text><text x="85.84" y="398.8" fill="#b2b2b2" font-family="'Liberation Mono',monospace" font-size="11.4">×</text><text transform="translate(94.16 398.2) scale(0.8 1)" x="0.18 7.78 12.48 18.63 26.23" fill="#b2b2b2" font-family="'Liberation Sans',sans-serif" font-size="10.4">1.00]</text><text transform="translate(118.76 398.2)" x="0.02" fill="#b2b2b2" font-family="'Liberation Mono','IPAGothic','Noto Sans CJK JP',monospace" font-size="9.8">－</text><text transform="translate(128.60 398.2) scale(0.8 1)" x="1.63" fill="#b2b2b2" font-family="'Liberation Sans',sans-serif" font-size="10.4">[</text><text transform="translate(133.52 398.2)" x="0.02 9.86" fill="#b2b2b2" font-family="'Liberation Mono','IPAGothic','Noto Sans CJK JP',monospace" font-size="9.8">白金</text><text transform="translate(158.12 398.2) scale(0.8 1)" x="0.18 6.33 13.93 18.63 24.78 32.38 37.08 44.68 49.38 55.53 61.68" fill="#b2b2b2" font-family="'Liberation Sans',sans-serif" font-size="10.4">26/06 5,930</text><text x="213.76" y="398.8" fill="#b2b2b2" font-family="'Liberation Mono',monospace" font-size="11.4">×</text><text transform="translate(222.08 398.2) scale(0.8 1)" x="0.18 7.78 12.48 18.63 26.23" fill="#b2b2b2" font-family="'Liberation Sans',sans-serif" font-size="10.4">1.00]</text><text transform="translate(251.60 398.2)" x="0.02 9.86" fill="#b2b2b2" font-family="'Liberation Mono','IPAGothic','Noto Sans CJK JP',monospace" font-size="9.8">終値</text><text transform="translate(276.20 398.2)" x="0.02 9.86" fill="#b2b2b2" font-family="'Liberation Mono','IPAGothic','Noto Sans CJK JP',monospace" font-size="9.8">時刻</text><text transform="translate(295.88 398.2) scale(0.8 1)" x="1.63 6.33 12.48 20.08 24.78 30.93 38.53 43.23 49.38 56.98 61.68 67.83 73.98" fill="#b2b2b2" font-family="'Liberation Sans',sans-serif" font-size="10.4">:06:00 10,208</text>
<path d="M6.6 168.5V169.4M7.5 170.1V171.0M8.5 167.8V169.4M13.2 165.0V165.9M17.1 162.8V163.7M19.0 163.0V164.6M21.8 166.5V167.4M24.7 163.6V164.5M25.6 163.7V164.6M26.6 166.4V167.3M31.3 176.6V177.8M32.3 177.2V178.1M34.2 178.9V180.5M36.1 180.0V181.2M38.0 179.7V180.9M39.9 176.2V177.4M40.8 173.6V174.5M41.8 171.7V173.3M45.6 168.3V169.5M47.5 163.8V165.4M50.3 158.5V159.7M52.2 154.9V155.8M57.0 156.5V157.4M57.9 158.4V160.0M59.8 160.1V161.0M60.8 161.6V162.5M61.7 161.6V162.8M62.7 162.9V164.5M65.5 164.9V165.8M67.4 166.0V166.9M68.4 164.8V165.7M69.3 163.6V165.2M71.2 159.8V161.0M73.1 159.1V160.0M74.1 160.0V160.9M75.0 159.6V161.2M76.0 161.0V162.2M76.9 159.6V161.2M77.9 161.4V162.3M78.8 161.8V163.0M79.8 160.8V162.0M82.6 161.4V162.6M83.6 161.0V162.6M87.4 145.6V146.5M90.2 133.1V134.0M91.2 130.0V131.2M92.1 128.7V129.6M96.9 131.6V132.5M97.8 132.5V134.1M100.7 126.7V127.6M101.6 125.0V125.9M104.5 127.0V127.9M105.4 129.5V130.7M106.4 127.0V128.2M108.3 126.8V127.7M109.2 129.0V129.9M120.6 129.9V130.8M124.4 121.2V122.1M125.4 124.0V124.9M131.1 129.5V130.4M133.9 131.4V132.6M135.8 134.1V135.3M137.7 138.1V139.0M141.5 131.0V132.6M143.4 136.3V137.9M146.3 136.3V137.9M148.2 132.1V133.3M156.7 139.8V140.7M160.5 144.4V146.0M161.5 145.5V146.4M163.4 146.6V147.5M164.3 145.3V146.9M165.3 144.2V145.8M166.2 142.7V143.6M167.2 140.8V141.7M170.0 134.3V135.2M171.0 133.3V134.9M173.8 136.3V137.9M174.8 140.0V140.9M177.6 143.1V144.0M179.5 140.0V141.6M180.5 134.4V136.0M183.3 142.9V143.8M184.3 143.9V144.8M185.2 145.0V146.2M190.0 150.9V152.1M191.9 145.8V147.0M192.8 144.0V144.9M193.8 145.8V147.4M194.7 145.7V146.6M196.6 145.0V146.2M198.5 143.3V144.2M202.3 149.4V150.3M204.2 150.9V152.1M205.2 152.7V153.6M209.0 145.4V146.3M209.9 144.3V145.5M210.9 142.9V144.1M212.8 139.8V140.7M213.7 137.8V138.7M217.5 134.3V135.9M222.3 130.7V132.3M225.1 131.0V132.6M226.1 131.5V133.1M230.8 134.7V135.6M234.6 134.5V135.4M235.6 133.3V134.5M246.0 133.5V135.1M247.0 133.1V134.7M247.9 134.0V134.9M249.8 132.8V134.4M252.7 131.1V132.3M254.6 129.0V129.9M255.5 127.3V128.2M258.4 131.9V132.8M261.2 130.6V131.5M265.0 137.3V138.2M266.0 135.7V136.9M270.7 134.4V135.3M271.7 136.5V137.4M272.6 135.0V135.9M273.6 132.0V133.2M275.5 128.0V128.9M277.4 127.9V128.8M279.3 128.4V129.6M284.0 128.0V128.9M286.9 136.2V137.1M300.2 139.1V140.0M303.0 144.3V145.2M307.8 142.0V143.6M310.6 143.2V144.4M316.3 144.6V145.5M323.0 151.4V153.0M328.7 146.7V147.6M329.6 145.4V147.0M332.5 146.6V147.5M335.3 143.3V144.9M339.1 139.6V140.5M341.0 139.1V140.0M348.6 148.3V149.9M352.4 150.3V151.2M354.3 144.6V146.2M359.1 144.4V146.0M360.0 145.9V146.8M361.9 149.1V150.0M365.7 145.4V146.3M372.4 145.0V146.2M373.3 145.6V147.2M375.2 147.1V148.0M381.9 147.1V148.3M386.6 147.1V148.0M387.6 146.3V147.2M390.4 146.4V147.3M394.2 148.3V149.9M396.1 144.1V145.3M397.1 142.6V143.5M400.9 139.8V141.4M402.8 139.4V140.3M406.6 139.1V140.0M408.5 145.5V146.7M410.4 132.3V133.2M413.2 131.1V132.3M417.0 126.5V127.4M420.8 136.1V137.7M423.7 136.3V137.5M427.5 144.8V145.7M429.4 142.9V143.8M431.3 143.9V144.8M437.9 143.7V144.9M441.7 146.8V147.7M445.5 145.6V146.5M449.3 142.5V143.4M453.1 141.0V142.2M459.8 155.2V156.4M463.6 158.8V160.0M468.3 156.1V157.3M474.0 160.9V162.1M477.8 161.6V162.8M481.6 150.9V152.5M483.5 144.4V145.3M485.4 144.8V145.7M489.2 142.1V143.0M490.2 140.0V140.9M491.1 138.4V140.0M494.0 134.9V136.1M496.8 131.0V131.9M500.6 126.4V127.3M503.5 126.2V127.4M505.4 128.4V130.0M509.2 127.3V128.2M510.1 127.0V127.9M511.1 124.2V125.1M513.0 123.3V124.2M517.7 122.0V123.2M521.5 125.6V127.2M524.4 129.6V130.8M526.3 129.2V130.8M528.2 125.3V126.2M531.0 122.5V123.7M532.0 122.9V123.8M535.8 122.8V123.7M538.6 122.8V123.7M544.3 127.7V129.3M545.3 125.8V126.7M546.2 125.2V126.4M552.9 121.1V122.3M554.8 124.5V126.1M555.7 125.9V126.8M556.7 126.3V127.9M570.9 118.4V120.0M574.7 121.0V122.2M578.5 115.6V116.5M581.4 116.2V117.8M582.3 116.5V117.7M586.1 112.8V113.7M587.1 114.2V115.1M588.0 115.3V116.5M590.9 115.9V116.8M599.4 116.9V118.5M601.3 115.4V116.6M605.1 113.0V113.9M606.1 113.5V114.4M611.8 119.1V120.7M614.6 120.0V121.2M615.6 120.9V121.8M620.3 123.7V124.6M627.0 125.4V126.3M631.7 129.0V130.2M632.7 129.4V130.3M635.5 133.3V134.9M638.4 132.8V133.7M640.3 129.6V130.5M641.2 132.1V133.0M643.1 135.2V136.1M644.1 133.5V135.1M647.9 129.4V130.3M648.8 125.8V127.0M649.8 124.1V125.7M653.6 121.6V123.2M655.5 123.8V125.0M666.9 111.0V111.9M668.8 111.8V112.7M670.7 115.0V116.6M672.6 118.3V119.9M674.5 122.4V123.3M676.4 116.4V118.0M682.1 115.6V116.5M685.9 106.2V107.4M686.8 103.1V104.7M687.8 99.6V100.8M694.4 91.8V92.7M698.2 92.2V93.1M699.2 94.1V95.7M700.1 94.5V95.4M701.1 97.3V98.2M703.0 98.2V99.1M706.8 97.4V98.6M719.1 83.6V85.2M721.0 79.9V80.8M722.9 75.4V76.3M723.9 73.1V74.0M724.8 73.2V74.1M726.7 74.6V75.5M728.6 77.2V78.1M729.6 78.7V79.6M732.4 72.2V73.4M737.2 75.6V76.8M738.1 73.0V74.6M741.0 75.6V76.8M742.9 72.0V73.6M745.7 71.3V72.9M746.7 72.5V73.4M748.6 71.6V72.8M752.4 76.5V77.7M754.3 76.4V78.0M758.1 73.3V74.9M760.0 70.5V71.7M764.7 63.8V65.4M766.6 59.5V60.4M768.5 54.3V55.9M772.3 52.7V54.3M773.3 52.5V53.4M775.2 55.3V56.2M777.1 58.8V59.7M778.0 60.1V61.0M779.0 60.7V61.6M780.9 61.9V62.8M782.8 62.1V63.7M784.7 65.2V66.8M785.6 66.1V67.0M790.4 70.9V71.8M791.3 71.7V72.9M797.0 74.4V75.3M798.0 72.3V73.2M799.9 68.8V70.0M800.8 72.5V74.1M809.4 72.1V73.0M810.3 72.1V73.0M813.2 70.7V71.9M816.0 70.8V72.4M818.9 72.4V73.3M821.7 72.9V73.8M825.5 74.1V75.7M828.4 70.3V71.2M829.3 68.7V69.6M834.1 64.8V66.0M836.9 68.8V69.7M838.8 70.4V72.0M842.6 78.6V79.8M843.6 79.8V81.4M849.3 74.8V76.0M851.2 74.4V75.3M853.1 75.6V76.5M854.0 76.5V77.7M855.0 79.8V81.0M855.9 80.7V81.9M856.9 80.8V81.7M866.4 59.4V60.3M870.2 59.5V60.4M871.1 59.4V61.0M872.1 57.9V58.8M873.0 56.6V57.8M875.9 54.9V55.8M877.8 50.8V51.7M878.7 48.6V49.5M880.6 47.6V48.5M881.6 47.6V49.2M884.4 48.4V49.3M886.3 50.9V52.5M888.2 56.1V57.0M890.1 58.5V60.1M893.9 53.6V55.2M895.8 54.1V55.3M896.8 54.2V55.8M897.7 56.2V57.1M898.7 57.5V58.4M899.6 52.0V53.2M903.4 53.5V55.1M904.4 52.8V54.0M905.3 51.5V52.4M906.3 52.3V53.9M910.1 57.8V59.0M913.9 57.9V58.8M914.8 61.0V62.6M921.5 59.0V59.9M922.4 60.8V62.0M925.3 70.0V71.2M929.1 72.0V72.9M931.0 74.3V75.2M933.8 74.7V75.9M934.8 74.4V76.0M937.6 73.5V74.7M938.6 74.6V76.2M942.4 75.9V76.8M947.1 80.4V81.3M948.1 81.0V82.2M949.0 83.1V84.0M950.0 84.1V85.3M952.8 85.4V87.0M953.8 85.2V86.1M954.7 86.2V87.4M955.7 86.5V87.4M956.6 87.9V89.1M959.5 91.5V92.7M960.4 91.9V93.1M962.3 94.5V95.4M963.3 93.8V95.0M964.2 91.9V92.8" stroke="#e6d67c" stroke-width="1.05" fill="none"/>
<path d="M16.1 160.7V163.9M18.0 161.6V164.8M19.9 165.2V166.6M20.9 165.1V167.7M28.5 169.5V171.5M29.4 171.5V173.5M42.7 171.4V173.4M46.5 166.4V168.4M51.3 156.0V157.4M56.0 153.6V156.8M64.6 163.7V166.9M88.3 136.9V141.9M89.3 134.9V137.3M93.1 125.3V129.3M95.0 124.1V130.1M95.9 127.8V131.8M102.6 123.4V125.8M103.5 124.8V128.8M110.2 129.1V135.1M112.1 132.8V140.3M113.0 134.8V140.8M115.9 126.5V129.7M116.8 125.9V130.9M117.8 123.2V130.7M118.7 126.4V132.4M121.6 127.6V130.0M126.3 125.9V130.9M127.3 131.3V133.7M129.2 129.6V132.0M130.1 128.7V131.9M132.0 128.3V130.7M133.0 127.1V134.6M134.9 133.2V136.4M136.8 134.8V139.8M139.6 133.6V138.6M140.6 130.7V136.7M142.5 132.7V135.1M147.2 131.2V136.2M150.1 131.4V137.4M151.0 136.5V142.5M152.0 139.3V142.5M152.9 141.1V146.1M155.8 139.7V145.7M157.7 138.4V145.9M158.6 140.4V142.8M159.6 139.4V146.9M162.4 146.6V150.6M172.9 131.2V137.2M175.7 139.2V145.2M176.7 142.9V146.9M181.4 130.3V135.3M182.4 134.5V139.5M188.1 146.1V151.1M195.7 142.8V150.3M199.5 142.2V145.4M200.4 143.2V145.6M203.3 149.1V153.1M206.1 149.4V151.8M211.8 137.9V145.4M223.2 127.6V135.1M227.0 130.5V136.5M228.0 132.8V136.0M229.9 133.1V138.1M232.7 136.0V138.4M233.7 133.2V136.4M239.4 128.5V131.7M240.3 127.4V131.4M243.2 133.0V135.4M244.1 131.1V137.1M245.1 129.8V137.3M250.8 130.7V135.7M251.7 130.9V135.9M256.5 126.7V129.9M257.4 126.1V132.1M259.3 131.1V136.1M260.3 130.6V133.8M263.1 130.5V136.5M268.8 129.4V136.9M269.8 130.8V136.8M276.4 128.2V130.6M278.3 127.3V131.3M280.2 128.4V132.4M281.2 127.5V133.5M283.1 127.9V131.1M285.9 131.1V137.1M287.8 134.3V141.8M288.8 135.6V140.6M289.7 134.1V138.1M290.7 138.2V143.2M291.6 140.3V146.3M292.6 143.9V147.9M301.1 139.2V144.2M302.1 140.6V143.8M304.0 143.3V146.5M308.7 140.4V147.9M311.6 139.8V145.8M313.5 140.0V145.0M314.4 139.5V145.5M315.4 141.9V144.3M317.3 144.1V148.1M319.2 148.5V150.9M320.1 149.1V152.3M322.0 149.4V154.4M326.8 146.4V149.6M331.5 144.4V150.4M333.4 143.5V149.5M336.3 141.9V145.1M345.8 143.3V146.5M346.7 145.3V147.7M347.7 145.2V150.2M353.4 146.2V150.2M356.2 142.1V147.1M362.9 146.0V153.5M364.8 148.0V150.4M366.7 141.1V146.1M367.6 139.7V144.7M368.6 138.2V145.7M370.5 143.1V145.5M371.4 142.3V148.3M379.0 140.1V143.3M380.9 141.9V147.9M382.8 145.3V148.5M383.8 144.8V150.8M389.5 144.2V150.2M391.4 146.8V149.2M398.0 138.1V143.1M399.0 137.5V145.0M403.7 139.0V144.0M405.6 139.2V141.6M414.2 131.1V133.5M419.9 133.7V136.1M421.8 135.8V139.0M422.7 134.6V138.6M425.6 140.0V142.4M428.4 141.2V146.2M432.2 142.0V146.0M433.2 145.0V146.8M435.1 144.7V147.1M436.0 143.6V145.4M438.9 144.4V149.4M440.8 146.4V150.4M452.2 139.4V144.4M454.1 142.3V144.1M455.0 142.6V145.8M456.0 144.9V146.7M456.9 147.8V149.6M458.8 151.7V154.9M470.2 157.1V160.3M473.1 160.3V162.1M475.0 161.7V164.1M475.9 160.4V165.4M478.8 159.4V163.4M484.5 143.2V148.2M502.5 124.1V128.1M506.3 127.2V132.2M512.0 122.0V124.4M513.9 121.4V125.4M515.8 119.4V123.4M516.8 121.2V124.4M518.7 121.4V123.2M519.6 122.6V124.4M520.6 123.7V126.1M522.5 126.6V129.8M527.2 125.9V129.9M529.1 121.0V126.0M533.9 120.1V123.3M534.8 121.9V123.7M537.7 121.7V124.9M539.6 121.7V126.7M541.5 126.2V130.2M542.4 127.7V130.9M543.4 126.4V128.8M549.1 118.5V122.5M550.0 119.6V122.0M551.0 118.9V121.3M551.9 121.5V123.3M557.6 126.4V128.2M559.5 125.6V127.4M566.2 122.2V124.6M569.0 119.4V121.2M571.9 117.5V119.9M575.7 120.6V122.4M576.6 118.3V121.5M579.5 112.6V117.6M585.2 111.8V114.2M592.8 115.2V117.6M594.7 116.7V119.9M595.6 117.6V119.4M597.5 117.7V120.9M598.5 118.0V120.4M600.4 114.2V119.2M603.2 113.3V117.3M608.0 114.3V116.1M609.9 116.3V118.1M610.8 116.8V120.8M613.7 119.4V122.6M617.5 119.2V124.2M619.4 121.2V124.4M622.2 126.9V128.7M623.2 127.6V130.0M627.9 123.4V125.2M628.9 122.0V124.4M629.8 123.5V126.7M630.8 124.6V128.6M633.6 129.4V134.4M636.5 135.9V137.7M642.2 132.7V134.5M646.9 129.4V131.2M650.7 120.9V124.1M651.7 119.2V123.2M654.5 120.8V125.8M656.4 123.6V126.6M659.3 118.8V127.8M660.2 119.6V125.6M664.0 109.0V118.0M665.0 111.9V116.9M665.9 111.0V117.0M667.8 109.1V114.1M669.7 113.3V118.3M671.6 115.8V120.8M675.4 120.0V123.0M677.3 112.4V115.4M678.3 106.3V112.3M679.2 106.1V115.1M681.1 111.2V118.7M683.0 113.3V116.3M688.7 99.9V103.9M696.3 87.5V91.5M705.8 92.5V101.5M707.7 98.4V104.4M708.7 94.5V98.5M709.6 87.8V92.8M711.5 87.9V92.9M712.5 86.5V95.5M713.4 88.6V94.6M716.3 84.9V89.9M720.1 78.1V85.6M722.0 77.2V80.2M725.8 68.7V76.2M727.7 72.9V78.9M733.4 69.7V73.7M734.3 69.8V78.8M736.2 75.6V80.6M749.5 68.3V72.3M750.5 70.6V73.0M751.4 74.9V77.3M755.2 76.7V79.9M756.2 78.4V80.2M757.1 76.2V78.0M759.0 69.1V73.1M762.8 70.1V71.9M763.8 66.0V69.2M767.6 56.8V60.0M771.4 52.8V55.2M774.2 54.5V57.1M776.1 56.0V58.6M781.8 60.6V63.2M786.6 67.5V70.1M787.5 66.7V69.3M788.5 68.6V71.2M789.4 70.1V72.1M792.3 74.4V75.8M793.2 72.9V76.3M794.2 75.4V78.0M795.1 75.2V77.8M801.8 73.0V75.0M802.7 76.2V77.6M806.5 72.2V74.8M811.3 71.9V73.3M817.9 73.0V74.4M820.8 72.0V74.0M822.7 73.3V76.7M823.6 73.5V75.5M833.1 65.6V67.0M837.9 69.5V70.9M839.8 73.0V74.4M841.7 77.1V79.1M858.8 75.0V76.4M859.7 72.0V74.6M868.3 56.3V59.7M885.4 50.4V51.8M892.0 54.0V57.4M900.6 48.3V50.9M907.2 55.2V57.2M908.2 56.4V59.8M909.1 57.3V59.3M912.0 54.5V57.1M912.9 56.8V58.8M915.8 63.2V65.2M917.7 59.9V61.3M920.5 57.2V59.8M923.4 63.3V64.7M930.0 71.7V75.1M932.9 75.5V76.9M939.5 75.1V76.5M940.5 76.5V77.9M943.3 75.0V76.4M945.2 76.0V78.6M946.2 79.3V80.7M951.9 84.6V88.0M957.6 88.7V90.7M958.5 89.5V91.5M969.0 84.2V86.2" stroke="#1474d6" stroke-width="1.05" fill="none"/>
<path d="M10.4 168.3V169.7M11.4 167.1V169.7M12.3 165.2V167.2M22.8 164.4V167.0M23.7 162.5V165.1M27.5 168.6V171.2M33.2 177.4V180.6M43.7 171.7V173.1M44.6 170.0V172.6M53.2 152.8V155.4M55.1 149.2V152.4M58.9 157.6V160.2M80.7 161.6V163.0M81.7 162.1V165.3M85.5 161.3V162.7M86.4 151.4V155.4M94.0 122.9V126.1M98.8 129.6V137.1M99.7 125.6V133.1M107.3 124.3V129.3M111.1 130.6V136.6M114.0 131.5V137.5M114.9 126.8V134.3M119.7 126.7V131.7M122.5 122.1V129.6M123.5 119.9V127.4M128.2 129.7V134.7M138.7 135.0V139.0M144.4 139.5V143.5M145.3 138.1V140.5M149.1 130.6V133.8M153.9 141.1V144.3M154.8 140.2V146.2M168.1 138.0V140.4M169.1 134.5V137.7M171.9 132.3V134.7M178.6 141.0V144.2M186.2 145.0V147.4M187.1 146.4V151.4M189.0 148.7V151.9M190.9 147.8V151.0M197.6 142.6V145.8M201.4 146.3V148.7M207.1 145.9V148.3M208.0 145.9V148.3M214.7 134.6V137.0M215.6 133.4V139.4M216.6 133.0V137.0M218.5 132.8V136.0M219.4 129.8V135.8M220.4 128.9V132.1M221.3 129.5V132.7M224.2 126.3V133.8M228.9 132.5V137.5M231.8 135.7V138.1M236.5 129.5V134.5M237.5 129.9V133.9M238.4 127.4V132.4M241.3 128.7V131.1M242.2 129.9V133.9M248.9 132.0V137.0M253.6 127.5V132.5M262.2 129.3V133.3M264.1 134.4V136.8M266.9 132.7V140.2M267.9 132.5V137.5M274.5 128.4V135.9M282.1 128.6V131.8M285.0 129.2V132.4M293.5 143.5V147.5M294.5 142.2V145.4M295.4 139.6V143.6M296.4 139.3V142.5M297.3 137.8V141.0M298.3 138.8V142.0M299.2 137.7V141.7M304.9 141.6V147.6M305.9 140.7V144.7M306.8 140.4V145.4M309.7 141.9V146.9M312.5 140.1V145.1M318.2 147.4V150.6M321.1 148.6V153.6M323.9 147.6V155.1M324.9 147.1V152.1M325.8 147.5V151.5M327.7 146.8V150.0M330.6 144.4V150.4M334.4 142.4V148.4M337.2 138.3V143.3M338.2 135.9V143.4M340.1 136.4V142.4M342.0 137.8V141.8M342.9 139.2V143.2M343.9 140.2V144.2M344.8 140.5V146.5M349.6 146.4V152.4M350.5 145.9V153.4M351.5 148.8V152.0M355.3 144.1V146.5M357.2 139.5V147.0M358.1 142.3V147.3M361.0 148.0V151.2M363.8 145.5V153.0M369.5 141.7V146.7M374.3 145.1V149.1M376.2 147.0V150.2M377.1 143.7V149.7M378.1 141.2V147.2M380.0 139.9V143.9M384.7 145.3V148.5M385.7 146.3V150.3M388.5 144.8V148.0M392.3 148.0V150.4M393.3 146.7V150.7M395.2 143.3V150.8M399.9 137.9V142.9M401.8 138.7V143.7M404.7 135.8V143.3M407.5 141.4V144.6M409.4 134.2V136.6M411.3 129.9V133.1M412.3 131.5V134.7M415.1 128.8V131.2M416.1 127.2V130.4M418.0 129.1V131.5M418.9 130.2V133.4M424.6 137.1V140.3M426.5 140.6V144.6M430.3 141.8V143.6M434.1 146.1V147.9M437.0 139.6V144.6M439.8 146.7V148.5M442.7 146.7V149.1M443.6 147.8V149.6M444.6 144.3V149.3M446.5 143.0V144.8M447.4 141.5V146.5M448.4 140.2V145.2M450.3 141.3V143.1M451.2 139.2V143.2M457.9 147.8V152.8M460.7 154.6V158.6M461.7 157.7V161.7M462.6 158.7V162.7M464.5 153.9V157.9M465.5 153.8V158.8M466.4 154.5V158.5M467.4 155.0V159.0M469.3 157.5V159.9M471.2 157.1V162.1M472.1 157.9V161.9M476.9 162.4V164.2M479.7 159.0V161.4M480.7 155.5V160.5M482.6 143.5V146.7M486.4 143.7V145.5M487.3 143.5V145.3M488.3 141.5V143.9M492.1 135.8V138.2M493.0 135.9V137.7M494.9 131.9V135.9M495.9 129.7V133.7M497.8 127.9V132.9M498.7 129.6V131.4M499.7 125.8V129.8M501.6 124.2V126.6M504.4 126.4V128.8M507.3 128.1V130.5M508.2 127.2V130.4M514.9 120.3V123.5M523.4 127.7V130.1M525.3 129.1V134.1M530.1 120.6V125.6M532.9 121.8V123.6M536.7 122.8V124.6M540.5 125.7V127.5M547.2 122.8V125.2M548.1 120.1V121.9M553.8 120.9V124.9M558.6 126.4V128.8M560.5 124.4V128.4M561.4 123.3V126.5M562.4 122.9V126.9M563.3 121.9V125.9M564.3 122.1V124.5M565.2 122.3V125.5M567.1 120.7V125.7M568.1 118.5V122.5M570.0 117.0V121.0M572.8 118.2V122.2M573.8 120.0V125.0M577.6 115.2V120.2M580.4 113.5V116.7M583.3 112.5V117.5M584.2 112.0V117.0M589.0 113.9V117.1M589.9 115.1V117.5M591.8 113.9V118.9M593.7 115.9V118.3M596.6 118.0V121.2M602.3 114.4V117.6M604.2 112.2V114.6M607.0 113.6V115.4M608.9 115.5V117.3M612.7 117.4V122.4M616.5 118.7V123.7M618.4 121.1V124.3M621.3 125.6V128.0M624.1 129.8V132.2M625.1 128.0V132.0M626.0 127.1V129.5M634.6 132.7V135.1M637.4 132.9V136.1M639.3 130.2V134.2M645.0 131.2V136.2M646.0 131.0V132.8M652.6 119.1V121.5M657.4 120.8V126.8M658.3 121.4V127.4M661.2 120.0V123.0M662.1 111.4V115.4M663.1 110.8V115.8M673.5 116.4V125.4M680.2 108.7V116.2M684.0 111.7V114.7M684.9 109.1V113.1M689.7 102.0V111.0M690.6 103.6V112.6M691.6 99.1V104.1M692.5 92.6V100.1M693.5 90.6V93.6M695.4 86.5V95.5M697.3 89.6V92.6M702.0 95.4V100.4M703.9 93.5V102.5M704.9 94.9V99.9M710.6 84.1V93.1M714.4 87.7V93.7M715.3 86.2V91.2M717.2 84.5V89.5M718.2 84.1V87.1M730.5 74.4V80.4M731.5 70.1V79.1M735.3 72.6V77.6M739.1 73.2V77.2M740.0 75.2V78.4M741.9 72.8V76.0M743.8 69.8V72.2M744.8 70.2V73.4M747.6 70.2V73.4M753.3 74.7V78.7M760.9 69.1V73.1M761.9 70.2V72.6M765.7 59.8V64.8M769.5 52.4V55.6M770.4 52.2V54.0M779.9 59.8V62.4M796.1 72.9V74.9M798.9 71.6V73.0M803.7 75.7V78.3M804.6 76.3V77.7M805.6 73.5V75.5M807.5 71.2V73.8M812.2 71.2V72.6M815.1 70.8V74.2M819.8 72.7V75.3M824.6 73.6V77.0M827.4 70.8V74.2M831.2 68.7V70.1M832.2 66.7V68.7M835.0 65.4V66.8M844.5 78.0V79.4M845.5 76.9V80.3M846.4 78.0V79.4M847.4 76.7V78.7M848.3 74.4V77.0M852.1 73.4V76.0M857.8 77.7V79.7M861.6 69.0V71.0M862.6 66.9V69.5M864.5 61.8V63.8M865.4 61.3V62.7M874.9 54.4V57.0M879.7 46.4V49.0M883.5 46.5V49.1M891.1 56.9V58.9M893.0 54.1V56.1M894.9 54.5V55.9M901.5 49.1V52.5M911.0 56.0V58.6M916.7 61.3V62.7M918.6 58.9V62.3M919.6 58.0V59.4M927.2 69.7V71.7M928.1 71.3V72.7M935.7 74.3V75.7M936.7 72.7V74.7M950.9 83.8V85.2M966.1 86.5V88.5M967.1 85.4V88.0M968.0 84.7V86.1" stroke="#ee0a0a" stroke-width="1.05" fill="none"/>
<rect x="968.2" y="71.6" width="1" height="1" fill="#e6d67c"/>
<path d="M6.4 351.0h1.8M13.0 342.3h1.8M16.7 336.6h1.8M17.9 342.3h1.8M21.1 342.3h1.8M22.7 334.2h1.8M29.0 313.0V317.0M30.1 332.5h1.8M30.6 338.3h1.8M34.6 340.5h1.8M36.6 334.2h1.8M37.7 340.5h1.8M39.4 344.5h1.8M40.7 346.9h1.8M43.1 352.5h1.8M45.2 342.0h1.8M51.6 340.5h1.8M54.1 336.6h1.8M62.7 334.2h1.8M66.0 332.5h1.8M70.8 323.9h1.8M71.7 319.8h1.8M75.4 322.3h1.8M80.1 326.0h1.8M82.7 334.2h1.8M85.2 344.3h1.8M98.8 291.6V301.6M104.5 275.3V285.3M134.0 263.0V265.0M146.9 262.0V266.0M163.2 252.9V258.9M177.8 281.8V283.8M180.0 277.0V281.0M189.6 290.6V302.6M192.5 296.9V302.9M195.8 285.7V297.7M208.9 272.2h1.8M211.3 268.1h1.8M216.3 259.8V261.8M218.7 258.3h1.8M220.3 260.0h1.8M217.1 262.0h1.8M229.3 264.0h1.8M237.4 262.4h1.8M241.2 270.5h1.8M244.8 273.8h1.8M248.8 272.2h1.8M251.3 270.5h1.8M256.2 272.2h1.8M257.8 274.6h1.8M264.3 280.7h1.8M267.6 270.5h1.8M270.4 276.3h1.8M282.5 260.0V262.0M284.0 260.6V262.6M285.5 266.5h1.8M287.1 272.2h1.8M296.9 270.5h1.8M299.4 261.6h1.8M303.5 260.0h1.8M321.6 270.0h1.8M336.3 271.5V277.5M344.0 280.0V284.0M347.5 282.0V284.0M352.6 280.6V284.6M359.0 259.0V261.0M362.1 266.0h1.8M365.1 250.0h1.8M368.0 245.1h1.8M376.2 253.0V255.0M372.1 260.0h1.8M384.1 262.0h1.8M389.1 244.0h1.8M394.6 237.0h1.8M400.0 229.0V231.0M409.4 215.3V229.3M408.1 214.0h1.8M418.5 230.0V232.0M420.3 229.0V232.0M425.2 221.5V223.5M428.6 251.0h1.8M437.0 254.1h1.8M440.2 263.9h1.8M438.1 266.0h1.8M444.5 269.7V272.7M446.5 269.0V277.0M440.7 264.2h1.8M451.1 258.0h1.8M455.4 260.2h1.8M457.6 268.0h1.8M463.6 274.0h1.8M467.6 264.0h1.8M473.3 273.2h1.8M475.1 272.0h1.8M485.1 278.5h1.8M486.6 272.0h1.8M508.4 276.5h1.8M509.6 270.5h1.8M516.5 270.4h1.8M515.1 270.4h1.8M519.0 273.2h1.8M520.6 276.5h1.8M523.1 280.9h1.8M525.2 288.7h1.8M526.1 274.4h1.8M528.0 274.4h1.8M529.6 274.4h1.8M532.0 268.3h1.8M532.9 265.4h1.8M535.3 270.3h1.8M538.2 271.9h1.8M537.1 270.5h1.8M546.0 264.9V266.9M543.6 265.9h1.8M552.7 265.9h1.8M554.1 270.3h1.8M556.5 271.9h1.8M558.9 268.3h1.8M563.0 278.4h1.8M566.8 282.2h1.8M559.9 268.5h1.8M563.1 278.6h1.8M568.1 282.7h1.8M572.1 270.5h1.8M579.6 286.3V288.3M581.1 286.0h1.8M588.4 253.9h1.8M589.3 257.6h1.8M592.9 270.5h1.8M595.3 264.5h1.8M601.6 253.5V255.9M607.3 270.8V272.8M608.0 280.8h1.8M616.3 297.0h1.8M624.6 303.5h1.8M626.8 319.9h1.8M628.4 305.5h1.8M627.6 311.5h1.8M635.7 319.9h1.8M635.4 320.0h1.8M641.0 332.5h1.8M646.6 331.0h1.8M650.1 336.5h1.8M651.9 334.1h1.8M656.0 337.9h1.8M657.1 338.0h1.8M660.1 332.5h1.8M664.6 329.7h1.8M663.6 325.0h1.8M672.1 301.5h1.8M674.8 296.3h1.8M679.3 315.5h1.8M686.9 296.5h1.8M691.5 305.3h1.8M699.2 295.2h1.8M697.6 295.2h1.8M700.8 301.2h1.8M701.7 306.4h1.8M702.4 303.0h1.8M707.0 305.3h1.8M709.0 295.5h1.8M709.8 299.2h1.8M713.1 306.5h1.8M722.0 296.3h1.8M726.6 296.3h1.8M726.9 303.2h1.8M734.3 295.0h1.8M733.1 295.2h1.8M740.1 285.0V288.0M739.3 284.0V286.0M748.7 301.6V305.6M748.0 300.8V303.2M750.6 304.5h1.8M749.3 301.5h1.8M753.0 313.4h1.8M764.3 351.0h1.8M767.4 340.7h1.8M771.9 336.6h1.8M773.9 340.7h1.8M781.2 346.9h1.8M786.9 336.6h1.8M791.8 334.1h1.8M798.8 317.5h1.8M803.4 346.9h1.8M807.0 334.1h1.8M808.1 322.4h1.8M812.4 319.6h1.8M813.0 312.1h1.8M815.1 317.5h1.8M820.4 323.7h1.8M821.7 332.5h1.8M827.0 312.1h1.8M837.3 330.2h1.8M852.6 334.3h1.8M853.8 330.5h1.8M855.7 331.5V333.5M860.8 323.7h1.8M863.3 319.6h1.8M866.5 319.6h1.8M878.4 319.6h1.8M896.4 305.3h1.8M906.6 317.5h1.8M909.8 334.1h1.8M912.4 323.7h1.8M918.1 337.0h1.8M918.9 338.5h1.8M928.2 344.7h1.8M929.8 348.5h1.8M935.3 347.5V349.5M937.3 352.2h1.8M946.1 336.6h1.8M955.9 337.9h1.8M957.2 336.6h1.8M100.0 292.4V295.4M101.0 291.2V293.2M110.1 270.5h1.8M117.0 269.6V271.6M119.1 268.5h1.8M130.1 259.6h1.8M142.0 260.9V263.9M176.1 282.5h1.8M194.1 293.3h1.8M208.1 268.8h1.8M325.0 265.5V267.5M327.0 272.3V274.3M370.1 246.5h1.8M474.1 281.3h1.8M488.1 275.5h1.8" stroke="#e6d67c" stroke-width="1.1" fill="none"/>
<path d="M9.0 354.5V356.7M26.0 322.0V326.0M29.8 317.0V331.7M87.6 303.0V321.0M89.7 305.6V308.9M88.2 302.4V310.4M96.3 285.7V297.7M115.0 263.0V287.0M128.9 253.5V261.5M132.2 259.2V267.2M141.1 257.6V265.6M142.8 264.5V268.5M149.3 264.3V270.3M152.2 247.0V257.0M153.4 250.9V260.9M159.5 241.0V249.0M160.7 243.9V249.9M167.8 251.0V261.0M168.9 253.3V263.3M174.2 274.5V284.5M176.2 274.8V290.8M181.9 267.4V283.4M185.2 279.9V293.9M187.6 277.8V287.8M204.7 276.5V282.5M207.2 264.7V274.7M204.0 278.3V282.3M207.3 265.5V275.5M225.3 265.0V268.0M239.9 265.8V268.8M261.6 277.5V281.5M273.4 266.9V269.3M281.5 258.0V262.0M293.4 261.5V271.5M296.2 267.4V270.4M307.6 265.6V269.6M311.0 254.5V260.5M315.4 259.7V271.7M319.8 261.0V272.0M320.8 258.7V270.7M329.8 270.5V278.5M331.4 278.8V284.8M339.2 269.7V277.7M342.0 276.4V282.4M345.8 280.3V288.3M354.7 278.0V284.0M360.8 256.8V262.8M371.9 234.3V254.3M373.0 240.0V248.0M376.3 260.9V266.9M378.0 263.0V269.0M379.5 257.9V269.9M381.0 260.0V268.0M384.4 255.2V261.2M388.0 245.0V249.0M395.3 219.0V237.0M396.5 228.0V236.0M402.0 225.0V233.0M403.2 222.2V232.2M404.5 224.0V232.0M408.2 237.0V239.0M414.2 224.2V230.2M415.5 228.5V231.5M417.0 230.6V233.6M421.0 230.0V232.0M425.9 222.5V226.5M427.9 236.6V240.6M432.5 242.9V248.9M434.0 243.0V251.0M435.5 243.5V251.5M438.7 259.1V262.1M450.6 247.6V251.6M453.0 254.6V257.6M459.6 265.2V268.2M462.0 267.0V273.0M464.0 268.0V274.0M469.8 269.1V275.7M471.8 277.4V280.4M478.3 271.4V291.4M479.5 287.0V293.0M480.8 288.6V298.6M482.7 283.8V288.8M488.1 268.2V278.2M492.2 277.7V280.1M495.1 278.1V284.7M541.9 270.1V272.1M551.4 263.6V265.6M557.7 274.0V280.6M571.9 267.8V275.8M574.0 279.5V281.5M575.2 281.2V290.2M585.3 267.3V271.3M587.5 259.0V263.0M598.5 250.0V257.0M604.0 263.3V275.3M610.5 283.8V285.8M612.5 288.0V296.0M613.5 285.0V297.0M615.5 295.0V301.0M616.3 294.2V304.8M617.9 301.5V310.5M619.0 306.0V312.0M619.8 312.1V319.5M623.3 302.7V312.7M626.0 308.9V312.9M630.1 313.0V317.0M633.0 309.2V314.2M635.6 312.5V316.5M637.2 321.0V331.0M638.5 326.0V332.0M646.4 325.9V331.9M648.9 326.5V332.5M630.8 313.0V317.0M633.3 309.3V314.3M636.3 310.9V315.9M637.0 322.0V332.6M638.3 332.0V340.0M646.3 326.4V331.4M649.2 327.4V335.4M650.4 337.1V351.7M655.3 339.5V346.1M658.6 340.0V346.0M663.4 325.6V329.6M668.8 308.5V315.1M676.8 298.7V301.1M682.2 319.6V323.6M683.3 317.0V323.0M684.1 314.7V325.3M688.4 292.3V296.3M709.1 300.8V304.8M712.3 302.7V312.7M718.0 309.0V313.0M736.8 292.0V294.0M738.1 282.1V286.1M744.1 288.1V294.7M746.1 294.6V301.2M745.0 293.5V298.5M752.6 305.3V313.3M755.2 315.5V340.5M754.3 312.0V320.0M760.3 344.0V346.4M759.0 344.2V346.2M761.5 344.5V346.5M764.3 345.7V357.7M771.2 327.2V333.8M775.8 341.4V346.4M803.0 336.3V344.3M819.8 309.4V322.4M835.9 325.8V327.8M847.8 329.7V336.3M851.9 332.0V334.0M856.3 333.4V336.8M908.2 317.5V332.1M918.0 329.9V333.9M920.4 341.2V349.2M932.3 351.7V356.7M966.1 339.8V345.8M98.0 292.8V297.8M103.0 282.4V288.4M108.0 272.4V275.1M112.0 265.1V270.1M116.0 271.6V278.7M124.0 267.9V270.3M135.0 259.2V265.9M138.0 259.7V265.4M140.0 257.3V263.1M148.0 264.1V267.5M155.0 258.4V262.2M162.0 250.8V254.3M179.0 277.5V282.0M191.0 295.2V301.0M194.0 291.7V298.3M206.0 272.9V279.0M343.0 278.2V284.6M345.0 281.9V287.0M374.0 243.1V247.7M399.0 226.5V232.0M423.0 221.8V228.4M437.0 252.2V257.8M461.0 268.2V271.8M467.0 268.7V271.2M496.0 279.6V282.7M643.0 325.7V329.5" stroke="#1474d6" stroke-width="1.1" fill="none"/>
<path d="M25.0 326.0V330.0M27.0 320.0V322.0M43.2 348.0V350.5M51.7 332.5V334.2M51.0 336.6V339.9M88.9 298.0V326.0M93.0 305.0V311.0M94.0 282.0V306.5M91.4 300.0V306.0M94.3 273.0V297.0M102.0 282.5V294.5M106.9 269.8V277.8M110.2 267.2V277.2M113.4 258.0V270.0M118.3 265.0V273.0M122.4 263.3V271.3M126.5 264.3V270.3M136.2 257.8V263.8M150.9 233.3V265.3M155.8 256.0V264.0M157.0 247.0V257.0M158.3 233.8V251.8M165.0 247.0V253.0M166.4 248.0V254.0M170.5 249.5V265.5M172.6 264.1V272.1M183.0 276.1V286.1M196.6 284.0V294.0M197.7 278.8V286.8M200.7 271.6V277.6M202.3 273.9V281.9M201.6 270.0V284.0M213.4 261.2V265.2M226.9 255.0V260.0M247.3 267.7V270.1M266.4 275.4V280.4M274.7 257.5V264.1M276.5 257.8V263.8M278.3 257.5V264.1M291.3 265.3V267.7M306.3 259.7V265.7M310.0 253.0V258.0M321.0 259.9V264.9M326.0 264.7V274.7M326.2 265.4V275.4M333.9 271.5V277.5M338.0 269.0V275.0M349.3 276.4V282.4M353.5 280.0V284.0M356.2 233.0V277.0M362.0 259.0V265.0M364.0 248.9V260.9M375.1 245.2V253.2M382.3 250.7V260.7M386.9 246.4V250.4M389.3 245.5V259.5M392.2 224.0V237.0M393.5 228.0V236.0M400.7 224.0V232.0M406.1 222.8V234.8M407.5 223.0V229.0M410.8 226.0V230.0M411.8 217.7V223.7M422.2 223.9V228.9M430.5 236.6V240.6M445.2 266.5V269.5M447.5 252.0V274.0M444.9 267.8V273.8M462.8 263.0V269.0M466.1 267.1V276.1M481.5 288.0V298.0M483.8 281.0V287.0M484.8 277.7V285.1M497.4 281.8V285.8M501.6 275.8V278.2M507.7 269.8V271.8M511.7 267.6V270.6M515.0 269.9V276.5M548.8 257.5V263.5M555.8 263.6V265.6M561.5 277.7V281.7M562.0 278.0V282.0M579.3 287.5V289.5M583.6 278.0V282.0M586.9 252.6V263.2M592.1 271.4V282.0M599.2 249.5V252.5M608.0 269.5V271.5M620.7 302.7V309.3M623.3 290.6V298.6M622.3 297.0V299.0M635.0 312.7V315.7M639.9 325.0V331.0M644.0 325.0V331.0M634.5 311.5V315.5M639.0 332.3V340.3M639.8 325.6V329.6M643.9 326.4V331.4M659.5 339.5V342.5M661.8 321.7V325.7M667.8 319.1V324.1M669.4 310.5V317.5M671.6 300.8V309.8M670.5 305.0V311.0M686.6 304.3V314.3M690.3 307.0V315.0M691.0 310.5V314.5M697.2 282.3V292.3M698.0 283.5V290.5M714.8 303.5V306.5M716.1 302.9V305.3M718.9 313.6V316.6M741.7 290.4V292.4M757.3 332.2V351.8M756.4 336.0V346.0M758.5 341.0V347.0M762.7 346.2V362.2M781.0 336.0V338.0M784.6 341.6V344.0M785.4 336.2V337.8M790.8 333.9V336.3M793.2 325.8V327.8M815.2 321.7V323.7M818.5 300.6V306.6M895.3 302.9V305.3M894.4 309.1V315.1M917.2 321.7V323.7M924.5 341.6V344.0M942.9 346.4V348.0M967.7 336.0V338.0M106.0 272.6V279.1M109.0 270.9V277.7M125.0 265.0V272.9M128.0 256.1V262.8M130.0 253.8V261.6M133.0 260.3V266.5M137.0 256.5V264.4M144.0 264.8V268.9M145.0 261.6V265.4M146.0 260.2V267.9M181.0 276.1V281.4M199.0 277.2V280.3M324.0 264.9V267.5M357.0 255.4V258.1M368.0 248.3V252.7M398.0 226.4V231.9M413.0 222.8V228.2M427.0 231.1V234.1M443.0 265.3V269.0M449.0 253.8V258.5M493.0 276.0V280.1" stroke="#ee0a0a" stroke-width="1.1" fill="none"/>
<polyline points="6.8,479.7 7.6,479.0 8.4,477.4 9.2,476.5 10.0,475.5 10.8,474.3 11.6,474.0 12.4,475.3 13.2,474.6 14.0,476.8 14.8,479.9 15.6,477.0 16.4,476.0 17.2,476.1 18.0,477.2 18.8,477.1 19.6,478.8 20.4,480.0 21.2,479.6 22.0,480.2 22.8,480.3 23.6,479.4 24.4,482.5 25.2,484.0 26.0,485.3 26.8,487.4 27.6,491.6 28.4,493.6 29.2,492.7 30.0,491.1 30.8,490.9 31.6,492.1 32.4,492.0 33.2,493.5 34.0,492.7 34.8,493.1 35.6,492.5 36.4,491.8 37.2,493.3 38.0,494.9 38.8,496.4 39.6,491.8 40.4,488.4 41.2,484.1 42.0,483.2 42.8,484.3 43.6,483.6 44.4,481.6 45.2,480.5 46.0,481.3 46.8,481.2 47.6,481.2 48.4,479.4 49.2,478.0 50.0,476.2 50.8,474.8 51.6,475.5 52.4,475.0 53.2,473.3 54.0,471.2 54.8,471.1 55.6,473.5 56.4,477.4 57.2,476.4 58.0,475.4 58.8,474.6 59.6,477.1 60.4,478.4 61.2,477.9 62.0,479.9 62.8,480.0 63.6,480.4 64.4,481.4 65.2,485.6 66.0,483.5 66.8,479.7 67.6,481.8 68.4,482.4 69.2,482.9 70.0,481.1 70.8,481.0 71.6,482.2 72.4,482.6 73.2,484.8 74.0,484.2 74.8,484.2 75.6,485.5 76.4,485.0 77.2,485.6 78.0,486.4 78.8,487.2 79.6,486.7 80.4,486.3 81.2,487.2 82.0,485.6 82.8,486.2 83.6,485.1 84.4,482.8 85.2,481.6 86.0,479.5 86.8,476.8 87.6,473.7 88.4,473.5 89.2,476.4 90.0,475.1 90.8,470.9 91.6,468.4 92.4,468.3 93.2,466.7 94.0,472.1 94.8,479.4 95.6,478.0 96.4,476.5 97.2,474.7 98.0,476.6 98.8,477.6 99.6,475.6 100.4,475.7 101.2,474.7 102.0,473.1 102.8,476.8 103.6,479.1 104.4,482.1 105.2,482.6 106.0,484.4 106.8,485.5 107.6,483.0 108.4,481.8 109.2,484.2 110.0,486.1 110.8,486.1 111.6,489.0 112.4,491.9 113.2,494.1 114.0,491.9 114.8,488.7 115.6,480.1 116.4,481.8 117.2,486.6 118.0,487.3 118.8,486.9 119.6,484.5 120.4,487.1 121.2,488.9 122.0,488.6 122.8,487.7 123.6,486.9 124.4,484.1 125.2,483.8 126.0,486.7 126.8,489.6 127.6,490.3 128.4,491.3 129.2,491.9 130.0,493.4 130.8,492.5 131.6,491.1 132.4,487.7 133.2,488.4 134.0,491.0 134.8,493.3 135.6,493.9 136.4,494.9 137.2,496.2 138.0,497.9 138.8,495.5 139.6,494.8 140.4,493.0 141.2,491.0 142.0,490.4 142.8,493.7 143.6,495.7 144.4,498.4 145.2,496.4 146.0,494.4 146.8,493.0 147.6,493.7 148.4,492.8 149.2,492.9 150.0,497.1 150.8,501.7 151.6,502.5 152.4,503.1 153.2,501.3 154.0,500.6 154.8,502.8 155.6,503.4 156.4,504.4 157.2,505.6 158.0,509.5 158.8,512.4 159.6,511.8 160.4,511.9 161.2,512.1 162.0,512.7 162.8,511.0 163.6,506.9 164.4,505.9 165.2,507.2 166.0,506.7 166.8,504.4 167.6,500.6 168.4,499.2 169.2,497.0 170.0,498.6 170.8,499.8 171.6,498.3 172.4,495.8 173.2,493.4 174.0,491.2 174.8,491.4 175.6,493.4 176.4,491.3 177.2,490.5 178.0,490.0 178.8,488.3 179.6,486.7 180.4,486.2 181.2,484.9 182.0,488.6 182.8,492.6 183.6,495.5 184.4,492.6 185.2,491.0 186.0,488.0 186.8,490.4 187.6,493.6 188.4,496.7 189.2,493.6 190.0,492.1 190.8,489.6 191.6,486.8 192.4,486.3 193.2,484.5 194.0,485.4 194.8,486.6 195.6,486.2 196.4,487.6 197.2,488.9 198.0,490.8 198.8,492.0 199.6,493.4 200.4,495.5 201.2,495.7 202.0,497.3 202.8,499.0 203.6,499.3 204.4,498.1 205.2,498.7 206.0,498.0 206.8,496.8 207.6,497.7 208.4,497.5 209.2,497.7 210.0,497.8 210.8,498.4 211.6,498.3 212.4,497.8 213.2,497.5 214.0,497.7 214.8,497.0 215.6,497.5 216.4,497.4 217.2,496.5 218.0,495.5 218.8,494.9 219.6,494.5 220.4,494.1 221.2,493.7 222.0,492.6 222.8,493.1 223.6,492.4 224.4,491.8 225.2,491.4 226.0,492.9 226.8,494.6 227.6,495.4 228.4,497.1 229.2,498.0 230.0,496.6 230.8,496.2 231.6,495.5 232.4,493.4 233.2,493.6 234.0,493.3 234.8,493.8 235.6,493.6 236.4,492.3 237.2,492.6 238.0,491.8 238.8,490.2 239.6,489.9 240.4,488.7 241.2,489.8 242.0,489.7 242.8,490.3 243.6,490.3 244.4,490.1 245.2,490.0 246.0,489.4 246.8,488.8 247.6,490.9 248.4,490.5 249.2,490.1 250.0,490.6 250.8,488.6 251.6,488.1 252.4,487.5 253.2,488.7 254.0,487.3 254.8,486.8 255.6,488.0 256.4,485.8 257.2,486.2 258.0,486.1 258.8,487.6 259.6,489.1 260.4,487.4 261.2,486.7 262.0,484.3 262.8,484.3 263.6,482.6 264.4,484.6 265.2,485.0 266.0,487.8 266.8,488.5 267.6,487.2 268.4,488.0 269.2,489.1 270.0,490.4 270.8,490.1 271.6,489.9 272.4,489.6 273.2,491.1 274.0,492.7 274.8,493.3 275.6,493.5 276.4,493.2 277.2,492.7 278.0,492.4 278.8,491.5 279.6,492.1 280.4,492.7 281.2,491.5 282.0,491.9 282.8,490.7 283.6,491.4 284.4,491.4 285.2,491.9 286.0,493.2 286.8,494.7 287.6,495.2 288.4,493.6 289.2,492.0 290.0,494.8 290.8,498.8 291.6,501.4 292.4,501.2 293.2,501.7 294.0,502.1 294.8,499.4 295.6,497.7 296.4,495.9 297.2,496.0 298.0,495.0 298.8,494.5 299.6,496.7 300.4,498.5 301.2,498.6 302.0,500.2 302.8,500.4 303.6,502.0 304.4,502.4 305.2,501.8 306.0,501.7 306.8,501.3 307.6,500.0 308.4,497.4 309.2,498.6 310.0,501.1 310.8,503.2 311.6,503.4 312.4,501.2 313.2,501.6 314.0,500.2 314.8,500.0 315.6,499.3 316.4,499.6 317.2,500.1 318.0,500.4 318.8,501.1 319.6,502.3 320.4,504.2 321.2,505.5 322.0,508.3 322.8,509.5 323.6,508.6 324.4,508.2 325.2,507.3 326.0,506.2 326.8,504.3 327.6,503.8 328.4,503.6 329.2,502.5 330.0,500.1 330.8,497.2 331.6,494.2 332.4,492.7 333.2,492.6 334.0,495.7 334.8,496.9 335.6,498.3 336.4,497.6 337.2,497.2 338.0,494.9 338.8,491.7 339.6,492.0 340.4,493.6 341.2,492.7 342.0,491.4 342.8,490.4 343.6,490.7 344.4,490.2 345.2,491.4 346.0,492.3 346.8,492.4 347.6,491.9 348.4,492.6 349.2,494.6 350.0,495.0 350.8,496.6 351.6,497.2 352.4,496.7 353.2,496.3 354.0,494.2 354.8,495.0 355.6,494.4 356.4,493.5 357.2,503.4 358.0,507.6 358.8,508.1 359.6,507.9 360.4,506.8 361.2,507.1 362.0,506.6 362.8,506.3 363.6,505.4 364.4,507.3 365.2,508.7 366.0,509.2 366.8,509.3 367.6,507.7 368.4,507.7 369.2,507.3 370.0,509.9 370.8,511.7 371.6,511.7 372.4,506.1 373.2,503.8 374.0,506.2 374.8,507.7 375.6,510.6 376.4,507.2 377.2,503.3 378.0,501.9 378.8,498.4 379.6,496.6 380.4,495.2 381.2,498.7 382.0,502.3 382.8,504.5 383.6,506.2 384.4,505.5 385.2,504.9 386.0,506.5 386.8,509.9 387.6,512.2 388.4,511.7 389.2,511.6 390.0,512.9 390.8,515.1 391.6,517.7 392.4,520.8 393.2,521.5 394.0,524.5 394.8,522.8 395.6,521.4 396.4,518.3 397.2,516.0 398.0,514.0 398.8,512.0 399.6,512.7 400.4,513.8 401.2,516.5 402.0,515.7 402.8,515.2 403.6,514.1 404.4,514.0 405.2,515.7 406.0,516.1 406.8,515.1 407.6,514.1 408.4,513.4 409.2,525.1 410.0,519.1 410.8,511.8 411.6,512.4 412.4,511.7 413.2,510.2 414.0,508.0 414.8,506.8 415.6,505.6 416.4,503.6 417.2,502.8 418.0,505.6 418.8,506.2 419.6,509.5 420.4,511.4 421.2,513.3 422.0,514.0 422.8,516.1 423.6,515.3 424.4,514.6 425.2,517.1 426.0,518.4 426.8,519.5 427.6,518.1 428.4,514.4 429.2,511.7 430.0,512.3 430.8,511.8 431.6,512.1 432.4,510.6 433.2,509.0 434.0,508.6 434.8,508.3 435.6,507.6 436.4,508.0 437.2,506.0 438.0,505.5 438.8,504.4 439.6,502.6 440.4,502.8 441.2,504.3 442.0,505.0 442.8,503.5 443.6,503.9 444.4,502.8 445.2,500.6 446.0,499.5 446.8,497.6 447.6,498.3 448.4,502.5 449.2,505.5 450.0,504.6 450.8,505.9 451.6,505.2 452.4,502.5 453.2,503.3 454.0,504.2 454.8,506.1 455.6,506.9 456.4,507.7 457.2,507.8 458.0,509.1 458.8,508.8 459.6,508.2 460.4,507.3 461.2,510.0 462.0,511.7 462.8,512.6 463.6,509.8 464.4,507.3 465.2,504.9 466.0,505.4 466.8,506.5 467.6,507.5 468.4,507.9 469.2,508.5 470.0,509.7 470.8,507.3 471.6,505.4 472.4,503.7 473.2,504.9 474.0,506.8 474.8,510.4 475.6,511.1 476.4,511.1 477.2,511.6 478.0,508.4 478.8,503.6 479.6,500.4 480.4,498.3 481.2,495.2 482.0,492.5 482.8,490.4 483.6,492.8 484.4,494.1 485.2,495.2 486.0,494.8 486.8,495.0 487.6,493.8 488.4,492.0 489.2,490.9 490.0,490.8 490.8,491.1 491.6,489.7 492.4,488.1 493.2,487.3 494.0,485.6 494.8,484.5 495.6,482.0 496.4,482.6 497.2,482.6 498.0,481.8 498.8,482.6 499.6,480.4 500.4,479.3 501.2,480.1 502.0,481.3 502.8,483.8 503.6,483.1 504.4,482.5 505.2,482.2 506.0,483.2 506.8,483.6 507.6,485.9 508.4,486.7 509.2,486.8 510.0,484.7 510.8,483.6 511.6,482.6 512.4,483.4 513.2,483.0 514.0,482.5 514.8,482.1 515.6,483.0 516.4,483.3 517.2,482.4 518.0,481.2 518.8,480.6 519.6,479.7 520.4,478.9 521.2,479.4 522.0,480.1 522.8,481.9 523.6,482.8 524.4,481.8 525.2,483.5 526.0,481.3 526.8,477.8 527.6,486.0 528.4,482.5 529.2,478.7 530.0,479.1 530.8,479.7 531.6,480.7 532.4,480.8 533.2,482.8 534.0,484.8 534.8,482.7 535.6,482.5 536.4,481.7 537.2,482.5 538.0,483.2 538.8,482.0 539.6,483.3 540.4,484.1 541.2,485.0 542.0,485.3 542.8,485.4 543.6,483.9 544.4,483.4 545.2,484.4 546.0,486.7 546.8,487.5 547.6,486.6 548.4,485.5 549.2,485.7 550.0,485.2 550.8,485.2 551.6,484.4 552.4,484.4 553.2,483.4 554.0,483.8 554.8,482.1 555.6,483.6 556.4,485.4 557.2,484.2 558.0,481.3 558.8,479.7 559.6,481.4 560.4,483.1 561.2,483.3 562.0,481.7 562.8,479.4 563.6,479.3 564.4,478.9 565.2,478.0 566.0,477.9 566.8,477.2 567.6,477.2 568.4,477.2 569.2,474.7 570.0,474.5 570.8,473.5 571.6,474.6 572.4,476.7 573.2,476.0 574.0,474.1 574.8,472.8 575.6,472.2 576.4,471.1 577.2,469.0 578.0,468.4 578.8,469.0 579.6,467.8 580.4,468.6 581.2,468.6 582.0,469.5 582.8,470.0 583.6,471.1 584.4,471.5 585.2,471.6 586.0,473.8 586.8,475.8 587.6,479.3 588.4,480.6 589.2,483.0 590.0,484.7 590.8,480.6 591.6,479.1 592.4,475.0 593.2,475.8 594.0,475.9 594.8,477.6 595.6,478.3 596.4,479.7 597.2,481.2 598.0,483.4 598.8,484.5 599.6,487.1 600.4,487.2 601.2,485.9 602.0,486.5 602.8,485.4 603.6,483.6 604.4,477.9 605.2,473.9 606.0,471.4 606.8,473.2 607.6,473.4 608.4,475.3 609.2,475.9 610.0,472.5 610.8,470.6 611.6,468.9 612.4,468.0 613.2,468.2 614.0,467.7 614.8,465.3 615.6,464.0 616.4,463.9 617.2,464.3 618.0,465.5 618.8,462.3 619.6,459.9 620.4,459.4 621.2,464.1 622.0,467.1 622.8,470.8 623.6,474.3 624.4,476.9 625.2,476.6 626.0,471.0 626.8,466.9 627.6,465.1 628.4,462.2 629.2,462.8 630.0,463.1 630.8,464.6 631.6,464.0 632.4,464.8 633.2,464.4 634.0,465.1 634.8,468.7 635.6,469.2 636.4,466.5 637.2,465.0 638.0,461.7 638.8,460.9 639.6,460.7 640.4,459.3 641.2,460.1 642.0,459.9 642.8,461.8 643.6,463.3 644.4,464.3 645.2,463.4 646.0,461.5 646.8,460.2 647.6,458.8 648.4,455.9 649.2,452.3 650.0,449.4 650.8,448.8 651.6,449.2 652.4,450.2 653.2,450.4 654.0,449.4 654.8,447.7 655.6,446.6 656.4,446.5 657.2,449.7 658.0,448.1 658.8,444.9 659.6,445.1 660.4,447.9 661.2,448.6 662.0,449.5 662.8,450.8 663.6,450.6 664.4,448.5 665.2,447.2 666.0,447.1 666.8,446.9 667.6,448.4 668.4,450.4 669.2,452.4 670.0,453.7 670.8,455.6 671.6,457.9 672.4,461.1 673.2,462.7 674.0,465.8 674.8,467.2 675.6,465.9 676.4,462.5 677.2,461.2 678.0,458.8 678.8,457.4 679.6,455.0 680.4,452.2 681.2,451.3 682.0,448.8 682.8,449.9 683.6,451.4 684.4,450.0 685.2,447.3 686.0,448.6 686.8,449.8 687.6,452.3 688.4,454.7 689.2,456.9 690.0,455.8 690.8,452.8 691.6,449.2 692.4,446.6 693.2,445.4 694.0,443.3 694.8,441.3 695.6,440.3 696.4,444.4 697.2,450.2 698.0,450.3 698.8,450.3 699.6,451.5 700.4,450.6 701.2,449.2 702.0,447.2 702.8,447.4 703.6,447.7 704.4,447.3 705.2,446.7 706.0,447.4 706.8,448.7 707.6,449.1 708.4,447.0 709.2,445.9 710.0,444.3 710.8,441.9 711.6,440.0 712.4,438.3 713.2,436.8 714.0,437.9 714.8,438.1 715.6,439.8 716.4,439.1 717.2,437.5 718.0,435.2 718.8,432.3 719.6,430.1 720.4,427.8 721.2,426.8 722.0,424.9 722.8,427.1 723.6,431.3 724.4,431.3 725.2,431.2 726.0,430.8 726.8,432.2 727.6,434.1 728.4,433.4 729.2,433.1 730.0,431.2 730.8,430.2 731.6,430.1 732.4,429.4 733.2,428.1 734.0,426.9 734.8,430.6 735.6,431.8 736.4,434.4 737.2,436.4 738.0,436.7 738.8,437.8 739.6,440.2 740.4,438.5 741.2,435.8 742.0,434.3 742.8,432.4 743.6,430.8 744.4,429.7 745.2,429.7 746.0,427.3 746.8,428.3 747.6,429.0 748.4,429.6 749.2,430.4 750.0,430.8 750.8,431.0 751.6,430.6 752.4,429.8 753.2,426.7 754.0,425.5 754.8,424.3 755.6,417.8 756.4,414.2 757.2,413.3 758.0,411.7 758.8,410.3 759.6,407.3 760.4,405.4 761.2,406.4 762.0,404.7 762.8,405.5 763.6,401.4 764.4,400.1 765.2,397.8 766.0,397.2 766.8,395.6 767.6,394.9 768.4,395.8 769.2,395.0 770.0,395.3 770.8,396.6 771.6,397.7 772.4,398.2 773.2,398.2 774.0,396.3 774.8,396.0 775.6,395.5 776.4,396.0 777.2,397.1 778.0,396.0 778.8,397.6 779.6,399.4 780.4,400.2 781.2,400.4 782.0,401.2 782.8,399.4 783.6,401.0 784.4,403.7 785.2,405.2 786.0,406.7 786.8,407.0 787.6,408.7 788.4,410.0 789.2,409.2 790.0,409.6 790.8,408.9 791.6,410.0 792.4,412.4 793.2,415.1 794.0,417.5 794.8,419.1 795.6,418.4 796.4,418.0 797.2,417.4 798.0,417.4 798.8,417.9 799.6,416.8 800.4,418.5 801.2,420.7 802.0,422.2 802.8,419.4 803.6,417.3 804.4,413.6 805.2,410.1 806.0,408.2 806.8,407.7 807.6,408.7 808.4,411.7 809.2,412.5 810.0,416.1 810.8,417.6 811.6,418.1 812.4,419.7 813.2,419.5 814.0,420.3 814.8,421.3 815.6,422.0 816.4,421.5 817.2,419.4 818.0,422.2 818.8,425.6 819.6,424.7 820.4,422.7 821.2,419.4 822.0,417.2 822.8,416.2 823.6,415.3 824.4,414.6 825.2,415.3 826.0,416.3 826.8,416.5 827.6,418.8 828.4,421.3 829.2,421.6 830.0,422.3 830.8,420.5 831.6,419.7 832.4,419.9 833.2,419.8 834.0,418.7 834.8,418.8 835.6,417.0 836.4,415.2 837.2,411.7 838.0,412.9 838.8,414.2 839.6,416.1 840.4,417.3 841.2,417.5 842.0,418.3 842.8,419.6 843.6,419.5 844.4,420.2 845.2,420.4 846.0,419.6 846.8,417.8 847.6,418.3 848.4,416.0 849.2,415.7 850.0,413.2 850.8,412.4 851.6,414.0 852.4,415.6 853.2,415.8 854.0,417.3 854.8,417.7 855.6,417.8 856.4,418.4 857.2,417.6 858.0,415.1 858.8,413.0 859.6,413.3 860.4,413.4 861.2,412.7 862.0,412.7 862.8,413.6 863.6,412.8 864.4,412.1 865.2,410.2 866.0,409.9 866.8,410.1 867.6,409.8 868.4,409.2 869.2,409.6 870.0,409.8 870.8,408.5 871.6,408.8 872.4,409.0 873.2,409.0 874.0,408.4 874.8,406.8 875.6,406.4 876.4,404.6 877.2,404.9 878.0,402.8 878.8,401.8 879.6,401.3 880.4,399.8 881.2,399.6 882.0,400.8 882.8,400.4 883.6,399.5 884.4,399.4 885.2,400.6 886.0,401.4 886.8,404.2 887.6,404.4 888.4,406.0 889.2,407.6 890.0,409.2 890.8,409.5 891.6,408.8 892.4,407.8 893.2,406.5 894.0,405.5 894.8,408.1 895.6,411.0 896.4,412.6 897.2,413.5 898.0,414.4 898.8,414.6 899.6,411.3 900.4,409.6 901.2,408.8 902.0,408.9 902.8,410.7 903.6,411.4 904.4,411.4 905.2,412.7 906.0,414.1 906.8,415.7 907.6,413.0 908.4,407.5 909.2,401.2 910.0,401.9 910.8,400.6 911.6,402.0 912.4,401.1 913.2,403.9 914.0,406.1 914.8,408.4 915.6,409.7 916.4,411.2 917.2,410.0 918.0,408.3 918.8,407.9 919.6,402.9 920.4,398.2 921.2,396.1 922.0,395.7 922.8,396.2 923.6,398.0 924.4,404.0 925.2,406.3 926.0,406.1 926.8,407.1 927.6,407.6 928.4,407.7 929.2,407.7 930.0,407.0 930.8,406.3 931.6,406.0 932.4,404.8 933.2,403.6 934.0,404.6 934.8,404.5 935.6,406.7 936.4,407.4 937.2,405.5 938.0,406.6 938.8,405.2 939.6,404.7 940.4,405.1 941.2,405.2 942.0,406.5 942.8,406.8 943.6,408.7 944.4,409.7 945.2,409.5 946.0,412.1 946.8,414.0 947.6,415.6 948.4,417.8 949.2,418.2 950.0,419.3 950.8,419.1 951.6,419.1 952.4,419.9 953.2,420.9 954.0,421.7 954.8,421.7 955.6,423.3 956.4,423.2 957.2,424.8 958.0,425.5 958.8,425.5 959.6,427.2 960.4,427.2 961.2,428.1 962.0,428.8 962.8,428.6 963.6,427.7 964.4,426.5 965.2,425.3 966.0,421.8 966.8,417.7 967.6,419.6 968.4,420.6 969.2,413.2 969.9,418.2" fill="none" stroke="#ff0000" stroke-width="1.8" stroke-linejoin="round"/>
<rect x="2" y="547" width="1020" height="3" fill="#d6d6d6"/>
<rect x="1019.8" y="20" width="2.2" height="530" fill="#d6d6d6"/>
<rect x="2" y="20" width="2.8" height="530" fill="#dedede"/>
</svg>
</body></html>
